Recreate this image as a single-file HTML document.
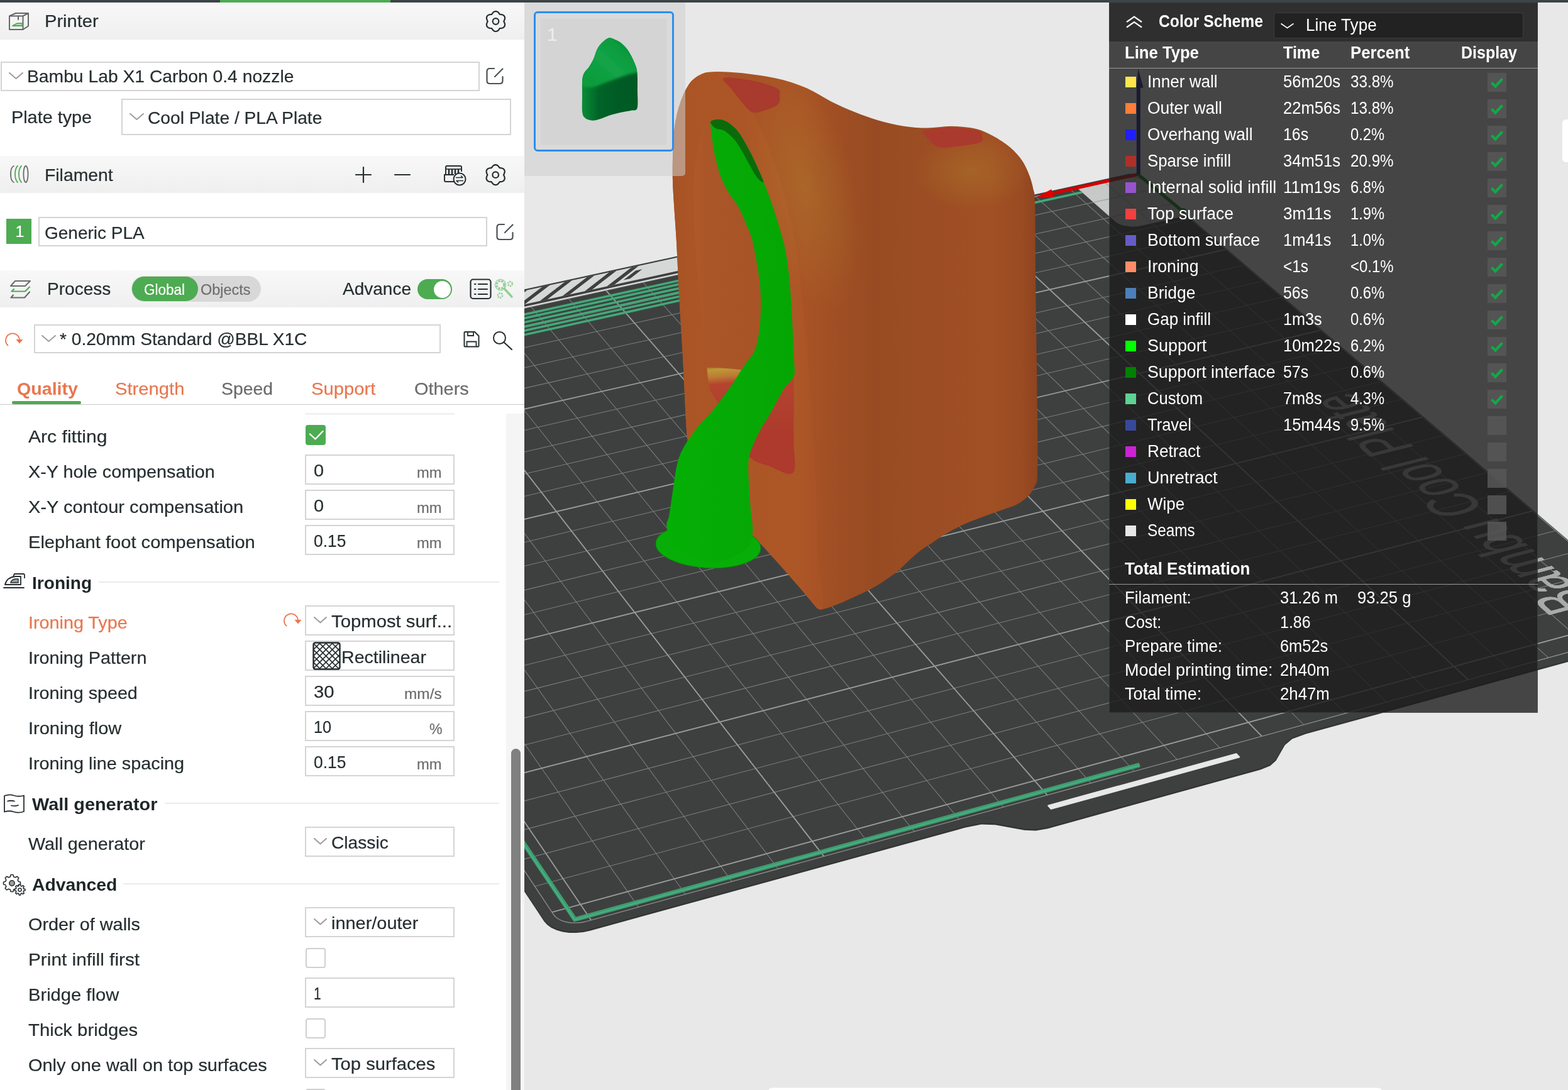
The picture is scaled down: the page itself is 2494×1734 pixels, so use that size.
<!DOCTYPE html>
<html><head><meta charset="utf-8"><title>Bambu Studio</title>
<style>
html,body{margin:0;padding:0}
body{width:2494px;height:1734px;overflow:hidden;background:#e8e8e8;font-family:"Liberation Sans",sans-serif;position:relative}
#topbar{position:absolute;left:0;top:0;width:2494px;height:4px;background:#3b4446}
#topbar div{position:absolute;left:350px;top:0;width:271px;height:4px;background:#4dab52}

#left{position:absolute;left:0;top:0;width:834px;height:1734px;background:#fff;overflow:hidden}
#left .t{position:absolute;line-height:1;white-space:nowrap;-webkit-text-stroke:0.2px currentColor;will-change:opacity}
#left .bx{position:absolute;box-sizing:border-box;border:2px solid #d4d4d4;background:#fff}
#left .ic{position:absolute;overflow:visible}
#left .hd{position:absolute;left:0;width:834px;background:linear-gradient(#f8f8f8,#efefef)}
#left .cb{position:absolute;width:32px;height:32px;box-sizing:border-box;border:2px solid #cfcfcf;border-radius:4px;background:#fff}
#left .cb.on{background:#4dab52;border:none}
#left .ln{position:absolute;height:1.6px;background:#ebebeb}


#legend{position:absolute;background:rgba(27,27,27,0.8);overflow:hidden;box-shadow:inset 0 0 0 1px rgba(120,120,130,0.25)}
#legend .t{position:absolute;line-height:1;white-space:nowrap}

</style></head><body>
<svg id="view" width="1660" height="1730" viewBox="834 4 1660 1730" style="position:absolute;left:834px;top:4px">

<defs>
<linearGradient id="gside" gradientUnits="userSpaceOnUse" x1="1280" y1="0" x2="1650" y2="0">
 <stop offset="0" stop-color="#a85326"/><stop offset="0.12" stop-color="#a04f24"/><stop offset="0.3" stop-color="#984b22"/><stop offset="0.55" stop-color="#9c4d23"/><stop offset="0.8" stop-color="#a15024"/><stop offset="0.93" stop-color="#9a4b22"/><stop offset="1" stop-color="#8e441f"/>
</linearGradient>
<linearGradient id="gfront" gradientUnits="userSpaceOnUse" x1="1070" y1="0" x2="1300" y2="0">
 <stop offset="0" stop-color="#a65225"/><stop offset="0.1" stop-color="#ab5526"/><stop offset="0.85" stop-color="#ad5727"/><stop offset="1" stop-color="#a85326"/>
</linearGradient>
<linearGradient id="ginner" gradientUnits="userSpaceOnUse" x1="1100" y1="0" x2="1262" y2="0">
 <stop offset="0" stop-color="#b05829"/><stop offset="0.15" stop-color="#ab5628"/><stop offset="0.6" stop-color="#a95427"/><stop offset="1" stop-color="#a45226"/>
</linearGradient>
<linearGradient id="gfloor" gradientUnits="userSpaceOnUse" x1="1124" y1="582" x2="1134" y2="700">
 <stop offset="0" stop-color="#b89a34" stop-opacity="0"/><stop offset="0.06" stop-color="#bb9a36"/><stop offset="0.16" stop-color="#bd7a34"/><stop offset="0.26" stop-color="#b4442f"/><stop offset="1" stop-color="#ad3a2c"/>
</linearGradient>
<linearGradient id="ggreen" gradientUnits="userSpaceOnUse" x1="1060" y1="0" x2="1262" y2="0">
 <stop offset="0" stop-color="#04b004"/><stop offset="0.45" stop-color="#06aa06"/><stop offset="1" stop-color="#04a604"/>
</linearGradient>
<radialGradient id="gy1"><stop offset="0" stop-color="#b08a2c" stop-opacity="0.34"/><stop offset="0.55" stop-color="#b0802c" stop-opacity="0.2"/><stop offset="1" stop-color="#b8802a" stop-opacity="0"/></radialGradient>
<radialGradient id="gy2"><stop offset="0" stop-color="#b08a2c" stop-opacity="0.34"/><stop offset="0.55" stop-color="#b0802c" stop-opacity="0.2"/><stop offset="1" stop-color="#b8802a" stop-opacity="0"/></radialGradient>

</defs>

<rect x="834" y="4" width="1660" height="1730" fill="#e8e8e8"/>
<path d="M297.2 604.1 L865.6 1463.4 L870.4 1468.8 L877.0 1473.5 L885.3 1477.3 L894.9 1479.9 L905.4 1481.4 L916.5 1481.6 L927.6 1480.5 L938.3 1478.2 L1534.6 1314.3 L1560.7 1309.1 L1583.0 1309.7 L1629.5 1318.2 L1647.7 1319.0 L1666.6 1315.7 L2005.0 1221.9 L2020.4 1215.7 L2029.6 1207.5 L2043.8 1182.8 L2055.4 1173.0 L2077.3 1165.1 L2620.3 1015.8 L2628.3 1013.0 L2634.9 1009.4 L2639.8 1005.1 L2643.0 1000.3 L2644.1 995.3 L2643.3 990.1 L2640.6 984.9 L2636.0 980.1 L1816.1 280.8 L1814.2 279.5 L1811.8 278.4 L1808.9 277.6 L1805.6 276.9 L1802.2 276.6 L1798.6 276.6 L1795.1 276.8 L1791.8 277.4 Z" fill="#333534" transform="translate(0,2.5)"/>
<path d="M1276.7 364.2 L281.5 580.2 L297.6 604.6 L1298.2 385.9 Z" fill="#3e403f"/>
<path d="M297.2 604.1 L865.6 1463.4 L870.4 1468.8 L877.0 1473.5 L885.3 1477.3 L894.9 1479.9 L905.4 1481.4 L916.5 1481.6 L927.6 1480.5 L938.3 1478.2 L1534.6 1314.3 L1560.7 1309.1 L1583.0 1309.7 L1629.5 1318.2 L1647.7 1319.0 L1666.6 1315.7 L2005.0 1221.9 L2020.4 1215.7 L2029.6 1207.5 L2043.8 1182.8 L2055.4 1173.0 L2077.3 1165.1 L2620.3 1015.8 L2628.3 1013.0 L2634.9 1009.4 L2639.8 1005.1 L2643.0 1000.3 L2644.1 995.3 L2643.3 990.1 L2640.6 984.9 L2636.0 980.1 L1816.1 280.8 L1814.2 279.5 L1811.8 278.4 L1808.9 277.6 L1805.6 276.9 L1802.2 276.6 L1798.6 276.6 L1795.1 276.8 L1791.8 277.4 Z" fill="#3e403f"/>
<path d="M1278.4 365.9 L282.7 582.1 L295.8 601.9 L1295.7 383.4 Z" fill="#d6d8d7"/>
<g fill="#3e403f"><path d="M977.1 453.0 L1015.9 422.9 L1004.2 425.4 L965.3 455.6 Z"/><path d="M941.7 460.8 L980.8 430.5 L969.0 433.0 L929.8 463.4 Z"/><path d="M906.1 468.6 L945.5 438.2 L933.8 440.7 L894.2 471.2 Z"/><path d="M870.3 476.4 L910.2 445.8 L898.3 448.4 L858.4 479.0 Z"/><path d="M834.4 484.2 L874.7 453.5 L862.8 456.1 L822.4 486.8 Z"/><path d="M798.4 492.1 L839.0 461.3 L827.1 463.9 L786.4 494.7 Z"/><path d="M762.2 500.0 L803.2 469.1 L791.3 471.7 L750.2 502.6 Z"/><path d="M725.9 507.9 L767.3 476.9 L755.3 479.5 L713.8 510.5 Z"/><path d="M689.5 515.9 L731.2 484.7 L719.2 487.3 L677.3 518.5 Z"/><path d="M652.9 523.9 L695.0 492.6 L682.9 495.2 L640.6 526.5 Z"/><path d="M616.1 531.9 L658.6 500.5 L646.5 503.1 L603.8 534.6 Z"/><path d="M579.2 539.9 L622.1 508.4 L609.9 511.1 L566.9 542.6 Z"/><path d="M542.2 548.0 L585.5 516.4 L573.2 519.0 L529.8 550.7 Z"/><path d="M505.0 556.2 L548.7 524.4 L536.4 527.0 L492.5 558.9 Z"/><path d="M467.6 564.3 L511.7 532.4 L499.4 535.1 L455.1 567.0 Z"/><path d="M430.1 572.5 L474.6 540.4 L462.2 543.1 L417.6 575.2 Z"/><path d="M392.5 580.7 L437.4 548.5 L424.9 551.2 L379.9 583.5 Z"/><path d="M354.7 589.0 L400.0 556.7 L387.5 559.4 L342.0 591.7 Z"/><path d="M316.7 597.3 L362.4 564.8 L349.9 567.5 L304.0 600.1 Z"/><path d="M278.6 605.6 L324.7 573.0 L312.1 575.7 L265.9 608.4 Z"/><path d="M240.3 614.0 L286.9 581.2 L274.2 584.0 L227.5 616.8 Z"/><path d="M1002.2 443.3 L1021.5 428.2 L1011.0 430.5 L991.6 445.6 Z"/></g>
<path d="M1809.6 277.0 L1712.3 298.3 L1774.5 353.0 L1777.7 355.2 L1781.9 357.2 L1786.8 358.7 L1792.3 359.8 L1798.2 360.3 L1804.2 360.4 L1810.2 359.9 L1815.8 359.0 L1887.0 343.0 Z" fill="#c7c9c8"/>
<path d="M1755.7 288.8 L2588.7 1011.9 M1836.9 300.3 L332.5 632.0 M1701.5 300.7 L2526.0 1029.0 M1864.6 323.9 L351.3 660.2 M1646.9 312.6 L2462.9 1046.3 M1892.6 347.9 L370.4 688.8 M1592.0 324.6 L2399.3 1063.8 M1921.1 372.1 L389.8 717.9 M1481.0 348.9 L2270.6 1099.0 M1979.2 421.7 L429.4 777.4 M1425.1 361.1 L2205.5 1116.9 M2008.9 447.1 L449.7 807.9 M1368.7 373.5 L2139.9 1134.9 M2039.0 472.8 L470.3 838.8 M1312.0 385.9 L2073.8 1153.0 M2069.6 498.9 L491.2 870.2 M1197.5 410.9 L1940.0 1189.7 M2132.1 552.2 L534.1 934.6 M1139.6 423.6 L1872.3 1208.3 M2164.0 579.4 L556.0 967.6 M1081.4 436.3 L1804.0 1227.0 M2196.4 607.1 L578.4 1001.1 M1022.8 449.1 L1735.2 1245.8 M2229.3 635.2 L601.1 1035.2 M904.5 475.0 L1595.9 1284.0 M2296.6 692.6 L647.6 1105.1 M844.8 488.1 L1525.4 1303.3 M2331.1 722.0 L671.5 1140.9 M784.6 501.2 L1454.4 1322.8 M2366.1 751.8 L695.7 1177.4 M724.0 514.5 L1382.7 1342.5 M2401.6 782.1 L720.4 1214.5 M601.7 541.2 L1237.7 1382.2 M2474.3 844.2 L771.1 1290.6 M539.9 554.8 L1164.2 1402.4 M2511.6 876.0 L797.1 1329.6 M477.7 568.4 L1090.2 1422.7 M2549.5 908.3 L823.6 1369.4 M415.1 582.1 L1015.5 1443.1 M2587.9 941.2 L850.6 1409.9" stroke="#7b7f7d" stroke-width="1.05" fill="none"/>
<path d="M1536.7 336.7 L2335.2 1081.3 M1950.0 396.8 L409.4 747.4 M1254.9 398.3 L2007.1 1171.3 M2100.6 525.3 L512.5 902.2 M963.9 462.0 L1665.8 1264.8 M2262.7 663.7 L624.1 1069.9 M663.1 527.8 L1310.5 1362.3 M2437.7 812.9 L745.5 1252.2 M352.1 595.9 L940.2 1463.8 M2627.0 974.5 L878.0 1451.1" stroke="#979b99" stroke-width="1.9" fill="none"/>
<path d="M1755.7 288.8 L1832.3 355.3 M1836.9 300.3 L1739.1 321.9 M1864.6 323.9 L1766.3 345.8" stroke="#aeb1af" stroke-width="1.3" fill="none"/>
<path d="M345.7 597.2 L339.7 598.9 L334.3 600.9 L329.7 603.4 L326.0 606.2 L323.5 609.1 L322.1 612.2 L322.1 615.2 L323.3 618.0 L880.8 1455.3 L884.2 1459.2 L889.0 1462.5 L894.9 1465.2 L901.7 1467.0 L909.2 1468.1 L917.1 1468.2 L925.0 1467.5 L932.6 1465.8 L2619.8 1003.3 L2625.5 1001.3 L2630.2 998.8 L2633.7 995.7 L2635.9 992.3 L2636.8 988.7 L2636.2 985.0 L2634.3 981.4 L2631.0 977.9 L1823.2 288.6 L1820.0 286.5 L1815.9 284.6 L1811.1 283.1 L1805.7 282.1 L1799.9 281.6 L1794.0 281.5 L1788.2 282.0 L1782.7 282.9 Z" stroke="#8b8f8d" stroke-width="1.3" fill="none"/>
<path d="M1299.5 387.2 L300.5 605.7" stroke="#e2e4e3" stroke-width="1.8" fill="none"/>
<path d="M1667.5 1281.6 L1671.9 1286.6 L1970.9 1204.3 L1966.3 1199.4 Z" fill="#e8e8e8" stroke="#e8e8e8" stroke-width="2.5" stroke-linejoin="round"/>
<path d="M1720.9 305.8 L281.7 621.4 M1494.1 361.2 L285.2 626.8 M1499.5 366.4 L289.0 632.7 M1504.9 371.6 L292.9 638.6 M1510.4 376.7 L296.8 644.6 M1515.8 381.9 L300.7 650.6" stroke="#3e9d71" stroke-width="3.8" fill="none"/>
<path d="M1720.9 305.8 L281.7 621.4 M1494.1 361.2 L285.2 626.8 M1499.5 366.4 L289.0 632.7 M1504.9 371.6 L292.9 638.6 M1510.4 376.7 L296.8 644.6 M1515.8 381.9 L300.7 650.6" stroke="#4fba89" stroke-width="1.2" fill="none" opacity="0.7"/>
<path d="M646.6 1064.3 L914.4 1462.7 L1812.7 1216.8" stroke="#3e9d71" stroke-width="7.2" fill="none" stroke-linejoin="miter"/>
<path d="M645.9 1064.5 L913.9 1463.3 L1813.0 1217.2" stroke="#4fba89" stroke-width="1.6" fill="none" opacity="0.8"/>
<path d="M1809.6 277.5 L1674 307.5" stroke="#d60000" stroke-width="5" fill="none"/>
<path d="M1646.5 314.8 L1672.4 301 L1675.5 313.8 Z" fill="#e00000"/>
<path d="M1809.6 277 L1881 336" stroke="#0a7a0a" stroke-width="5" stroke-linecap="round" fill="none"/>
<circle cx="1882" cy="336" r="5" fill="#0a7a0a"/>
<path d="M1810.8 277 L1810.8 138" stroke="#15158c" stroke-width="6" fill="none"/>
<path d="M1810.3 109 L1818.5 139.5 L1807.6 140 Z" fill="#15158c"/>
<clipPath id="cbody"><path d="M1096.0 750.0 C1086.6 732.5 1094.3 711.7 1093.6 700.0 C1092.9 688.3 1093.0 702.0 1091.7 680.0 C1090.4 658.0 1087.9 602.3 1086.0 568.0 C1084.1 533.7 1082.1 505.3 1080.4 474.0 C1078.7 442.7 1077.4 409.0 1075.7 380.0 C1074.0 351.0 1071.5 321.7 1070.5 300.0 C1069.5 278.3 1069.6 266.2 1070.0 250.0 C1070.4 233.8 1071.0 216.9 1072.9 202.8 C1074.8 188.7 1077.5 176.8 1081.4 165.2 C1085.3 153.6 1090.8 141.0 1096.4 133.2 C1102.0 125.4 1108.9 121.3 1115.2 118.2 C1121.5 115.1 1124.6 114.9 1134.0 114.4 C1143.4 113.9 1159.1 114.5 1171.6 115.4 C1184.1 116.3 1196.7 118.0 1209.2 120.0 C1221.7 122.0 1234.3 124.1 1246.8 127.6 C1259.3 131.1 1271.9 135.2 1284.4 140.8 C1296.9 146.4 1309.5 155.2 1322.0 161.4 C1334.5 167.7 1347.1 173.3 1359.6 178.3 C1372.1 183.3 1384.0 187.8 1397.0 191.5 C1410.0 195.2 1424.6 198.8 1437.6 200.8 C1450.6 202.8 1462.7 203.6 1475.2 203.6 C1487.7 203.6 1500.3 200.7 1512.8 200.8 C1525.3 201.0 1539.4 202.0 1550.4 204.5 C1561.4 207.0 1569.2 210.8 1578.6 215.8 C1588.0 220.8 1599.0 228.0 1606.8 234.6 C1614.6 241.2 1620.6 248.1 1625.6 255.3 C1630.6 262.5 1633.8 270.3 1636.8 277.8 C1639.8 285.3 1641.8 292.5 1643.4 300.4 C1645.0 308.3 1645.6 300.1 1646.2 325.0 C1646.8 349.9 1646.6 394.2 1647.2 450.0 C1647.8 505.8 1649.5 609.3 1650.0 660.0 C1650.5 710.7 1650.6 735.2 1650.0 754.0 C1649.4 772.8 1648.7 766.8 1646.2 772.8 C1643.7 778.8 1640.0 784.7 1635.0 789.7 C1630.0 794.7 1624.0 799.0 1616.2 802.9 C1608.4 806.8 1597.4 809.8 1588.0 813.2 C1578.6 816.6 1569.2 819.9 1559.8 823.5 C1550.4 827.1 1541.0 830.4 1531.6 834.8 C1522.2 839.2 1512.0 844.7 1503.4 849.8 C1494.8 854.9 1486.5 861.0 1480.0 865.3 C1473.5 869.6 1469.8 871.6 1464.2 875.8 C1458.7 880.0 1452.6 885.4 1446.7 890.7 C1440.8 896.0 1434.9 902.4 1429.1 907.4 C1423.2 912.4 1417.4 916.4 1411.6 920.5 C1405.8 924.6 1399.8 928.4 1394.0 931.9 C1388.2 935.4 1382.3 938.7 1376.5 941.6 C1370.7 944.5 1364.8 946.9 1358.9 949.5 C1353.1 952.1 1347.2 954.9 1341.4 957.4 C1335.6 959.9 1328.3 962.7 1323.9 964.4 C1319.5 966.1 1318.0 966.6 1315.1 967.5 C1312.2 968.4 1308.5 969.4 1306.3 969.6 C1304.1 969.8 1303.4 969.5 1301.9 968.8 C1300.4 968.1 1299.7 967.6 1297.5 965.3 C1295.3 962.9 1291.7 958.2 1288.8 954.7 C1285.9 951.2 1283.9 948.7 1280.0 944.2 C1276.1 939.7 1271.1 933.9 1265.6 927.5 C1260.1 921.1 1253.1 913.1 1246.8 906.0 C1240.5 898.9 1234.3 891.9 1228.0 885.0 C1221.7 878.1 1222.0 877.8 1209.0 864.5 C1196.0 851.2 1168.8 824.1 1150.0 805.0 C1131.2 785.9 1105.4 767.5 1096.0 750.0 Z"/></clipPath>
<path d="M1096.0 750.0 C1086.6 732.5 1094.3 711.7 1093.6 700.0 C1092.9 688.3 1093.0 702.0 1091.7 680.0 C1090.4 658.0 1087.9 602.3 1086.0 568.0 C1084.1 533.7 1082.1 505.3 1080.4 474.0 C1078.7 442.7 1077.4 409.0 1075.7 380.0 C1074.0 351.0 1071.5 321.7 1070.5 300.0 C1069.5 278.3 1069.6 266.2 1070.0 250.0 C1070.4 233.8 1071.0 216.9 1072.9 202.8 C1074.8 188.7 1077.5 176.8 1081.4 165.2 C1085.3 153.6 1090.8 141.0 1096.4 133.2 C1102.0 125.4 1108.9 121.3 1115.2 118.2 C1121.5 115.1 1124.6 114.9 1134.0 114.4 C1143.4 113.9 1159.1 114.5 1171.6 115.4 C1184.1 116.3 1196.7 118.0 1209.2 120.0 C1221.7 122.0 1234.3 124.1 1246.8 127.6 C1259.3 131.1 1271.9 135.2 1284.4 140.8 C1296.9 146.4 1309.5 155.2 1322.0 161.4 C1334.5 167.7 1347.1 173.3 1359.6 178.3 C1372.1 183.3 1384.0 187.8 1397.0 191.5 C1410.0 195.2 1424.6 198.8 1437.6 200.8 C1450.6 202.8 1462.7 203.6 1475.2 203.6 C1487.7 203.6 1500.3 200.7 1512.8 200.8 C1525.3 201.0 1539.4 202.0 1550.4 204.5 C1561.4 207.0 1569.2 210.8 1578.6 215.8 C1588.0 220.8 1599.0 228.0 1606.8 234.6 C1614.6 241.2 1620.6 248.1 1625.6 255.3 C1630.6 262.5 1633.8 270.3 1636.8 277.8 C1639.8 285.3 1641.8 292.5 1643.4 300.4 C1645.0 308.3 1645.6 300.1 1646.2 325.0 C1646.8 349.9 1646.6 394.2 1647.2 450.0 C1647.8 505.8 1649.5 609.3 1650.0 660.0 C1650.5 710.7 1650.6 735.2 1650.0 754.0 C1649.4 772.8 1648.7 766.8 1646.2 772.8 C1643.7 778.8 1640.0 784.7 1635.0 789.7 C1630.0 794.7 1624.0 799.0 1616.2 802.9 C1608.4 806.8 1597.4 809.8 1588.0 813.2 C1578.6 816.6 1569.2 819.9 1559.8 823.5 C1550.4 827.1 1541.0 830.4 1531.6 834.8 C1522.2 839.2 1512.0 844.7 1503.4 849.8 C1494.8 854.9 1486.5 861.0 1480.0 865.3 C1473.5 869.6 1469.8 871.6 1464.2 875.8 C1458.7 880.0 1452.6 885.4 1446.7 890.7 C1440.8 896.0 1434.9 902.4 1429.1 907.4 C1423.2 912.4 1417.4 916.4 1411.6 920.5 C1405.8 924.6 1399.8 928.4 1394.0 931.9 C1388.2 935.4 1382.3 938.7 1376.5 941.6 C1370.7 944.5 1364.8 946.9 1358.9 949.5 C1353.1 952.1 1347.2 954.9 1341.4 957.4 C1335.6 959.9 1328.3 962.7 1323.9 964.4 C1319.5 966.1 1318.0 966.6 1315.1 967.5 C1312.2 968.4 1308.5 969.4 1306.3 969.6 C1304.1 969.8 1303.4 969.5 1301.9 968.8 C1300.4 968.1 1299.7 967.6 1297.5 965.3 C1295.3 962.9 1291.7 958.2 1288.8 954.7 C1285.9 951.2 1283.9 948.7 1280.0 944.2 C1276.1 939.7 1271.1 933.9 1265.6 927.5 C1260.1 921.1 1253.1 913.1 1246.8 906.0 C1240.5 898.9 1234.3 891.9 1228.0 885.0 C1221.7 878.1 1222.0 877.8 1209.0 864.5 C1196.0 851.2 1168.8 824.1 1150.0 805.0 C1131.2 785.9 1105.4 767.5 1096.0 750.0 Z" fill="url(#gside)"/>
<path d="M1050.0 760.0 C1025.0 613.3 1036.0 210.0 1050.0 100.0 C1064.0 -10.0 1117.3 97.2 1134.0 100.0 C1150.7 102.8 1144.0 111.2 1150.0 117.0 C1156.0 122.8 1163.3 126.3 1170.0 135.0 C1176.7 143.7 1183.9 157.7 1190.4 169.0 C1196.9 180.3 1202.9 189.3 1209.2 202.8 C1215.5 216.3 1221.7 232.6 1228.0 249.8 C1234.3 267.0 1241.1 286.2 1246.8 306.2 C1252.5 326.2 1257.8 347.7 1262.0 370.0 C1266.2 392.3 1269.0 415.0 1272.0 440.0 C1275.0 465.0 1277.5 493.3 1280.0 520.0 C1282.5 546.7 1285.0 573.3 1287.0 600.0 C1289.0 626.7 1290.2 651.2 1292.0 680.0 C1293.8 708.8 1296.1 738.5 1297.5 772.8 C1298.9 807.1 1299.8 851.1 1300.5 885.6 C1301.2 920.1 1318.5 964.3 1301.8 980.0 C1285.0 995.7 1242.0 1016.7 1200.0 980.0 C1158.0 943.3 1075.0 906.7 1050.0 760.0 Z" fill="url(#gfront)" clip-path="url(#cbody)"/>
<g clip-path="url(#cbody)"><ellipse cx="1280" cy="300" rx="80" ry="200" fill="url(#gy1)" transform="rotate(-14 1280 300)"/><ellipse cx="1545" cy="272" rx="95" ry="62" fill="url(#gy2)"/></g>
<path d="M1150.9 123.8 C1156.4 121.8 1180.9 125.3 1195.0 128.0 C1209.1 130.7 1228.0 136.0 1235.5 140.0 C1243.0 144.0 1239.7 147.7 1240.0 152.0 C1240.3 156.3 1241.1 162.2 1237.4 166.0 C1233.7 169.8 1224.9 172.9 1218.0 175.0 C1211.1 177.1 1202.7 180.8 1196.0 178.3 C1189.3 175.8 1183.7 166.4 1178.0 160.0 C1172.3 153.6 1166.5 146.0 1162.0 140.0 C1157.5 134.0 1145.4 125.8 1150.9 123.8 Z" fill="#a83a2e"/>
<path d="M1469.5 208.5 C1474.8 205.3 1495.9 203.2 1510.0 203.0 C1524.1 202.8 1545.3 204.8 1554.0 207.0 C1562.7 209.2 1561.0 212.8 1562.0 216.0 C1563.0 219.2 1565.1 223.3 1559.8 226.0 C1554.5 228.7 1541.0 230.6 1530.0 232.0 C1519.0 233.4 1502.7 236.3 1494.0 234.6 C1485.3 232.9 1482.1 226.3 1478.0 222.0 C1473.9 217.7 1464.2 211.7 1469.5 208.5 Z" fill="#ab3a2e"/>
<clipPath id="copen"><path d="M1130.2 193.4 C1123.9 196.4 1118.7 202.5 1115.2 210.3 C1111.8 218.1 1111.3 229.1 1109.5 240.4 C1107.7 251.7 1105.4 263.1 1104.5 278.0 C1103.6 292.9 1103.8 313.0 1104.0 330.0 C1104.2 347.0 1104.8 361.7 1105.8 380.0 C1106.8 398.3 1108.5 421.2 1110.0 440.0 C1111.5 458.8 1112.9 471.5 1115.0 492.8 C1117.1 514.1 1120.5 547.6 1122.7 568.0 C1124.9 588.4 1126.1 605.0 1128.0 615.0 C1129.9 625.0 1128.7 618.8 1134.0 628.0 C1139.3 637.2 1150.7 653.8 1160.0 670.0 C1169.3 686.2 1179.2 713.0 1190.0 725.0 C1200.8 737.0 1213.1 737.5 1225.0 742.0 C1236.9 746.5 1255.2 759.0 1261.5 752.0 C1267.8 745.0 1262.3 725.7 1262.5 700.0 C1262.7 674.3 1262.7 620.0 1262.7 598.0 C1262.7 576.0 1263.5 588.7 1262.7 568.0 C1261.9 547.3 1259.7 499.1 1258.0 474.0 C1256.3 448.9 1254.6 433.3 1252.4 417.6 C1250.2 401.9 1249.0 395.4 1244.9 380.0 C1240.8 364.6 1234.0 342.3 1228.0 325.0 C1222.0 307.7 1215.5 290.7 1209.2 276.0 C1202.9 261.3 1196.7 248.2 1190.4 236.6 C1184.1 225.0 1177.9 213.9 1171.6 206.5 C1165.3 199.1 1159.7 194.6 1152.8 192.4 C1145.9 190.2 1136.5 190.4 1130.2 193.4 Z"/></clipPath>
<path d="M1130.2 193.4 C1123.9 196.4 1118.7 202.5 1115.2 210.3 C1111.8 218.1 1111.3 229.1 1109.5 240.4 C1107.7 251.7 1105.4 263.1 1104.5 278.0 C1103.6 292.9 1103.8 313.0 1104.0 330.0 C1104.2 347.0 1104.8 361.7 1105.8 380.0 C1106.8 398.3 1108.5 421.2 1110.0 440.0 C1111.5 458.8 1112.9 471.5 1115.0 492.8 C1117.1 514.1 1120.5 547.6 1122.7 568.0 C1124.9 588.4 1126.1 605.0 1128.0 615.0 C1129.9 625.0 1128.7 618.8 1134.0 628.0 C1139.3 637.2 1150.7 653.8 1160.0 670.0 C1169.3 686.2 1179.2 713.0 1190.0 725.0 C1200.8 737.0 1213.1 737.5 1225.0 742.0 C1236.9 746.5 1255.2 759.0 1261.5 752.0 C1267.8 745.0 1262.3 725.7 1262.5 700.0 C1262.7 674.3 1262.7 620.0 1262.7 598.0 C1262.7 576.0 1263.5 588.7 1262.7 568.0 C1261.9 547.3 1259.7 499.1 1258.0 474.0 C1256.3 448.9 1254.6 433.3 1252.4 417.6 C1250.2 401.9 1249.0 395.4 1244.9 380.0 C1240.8 364.6 1234.0 342.3 1228.0 325.0 C1222.0 307.7 1215.5 290.7 1209.2 276.0 C1202.9 261.3 1196.7 248.2 1190.4 236.6 C1184.1 225.0 1177.9 213.9 1171.6 206.5 C1165.3 199.1 1159.7 194.6 1152.8 192.4 C1145.9 190.2 1136.5 190.4 1130.2 193.4 Z" fill="url(#ginner)"/>
<path d="M1118.0 600.0 C1117.0 590.8 1110.3 586.7 1124.0 585.0 C1137.7 583.3 1176.3 588.2 1200.0 590.0 C1223.7 591.8 1255.0 567.7 1266.0 596.0 C1277.0 624.3 1272.8 734.3 1266.0 760.0 C1259.2 785.7 1237.7 754.2 1225.0 750.0 C1212.3 745.8 1200.8 746.7 1190.0 735.0 C1179.2 723.3 1170.0 695.8 1160.0 680.0 C1150.0 664.2 1137.0 653.3 1130.0 640.0 C1123.0 626.7 1119.0 609.2 1118.0 600.0 Z" fill="url(#gfloor)" clip-path="url(#copen)"/>
<ellipse cx="1126.5" cy="868.5" rx="83.5" ry="35" fill="#08ae08" transform="rotate(3 1126.5 868.5)"/>
<ellipse cx="1126.5" cy="868.5" rx="83.5" ry="35" fill="none" stroke="#0a8a0a" stroke-width="1" transform="rotate(3 1126.5 868.5)"/>
<path d="M1130.5 195.0 C1129.2 199.0 1131.1 207.1 1132.0 215.0 C1132.9 222.9 1133.7 231.6 1136.0 242.4 C1138.3 253.2 1142.3 269.6 1146.0 280.0 C1149.7 290.4 1153.2 296.7 1158.0 305.0 C1162.8 313.3 1170.3 321.7 1175.0 330.0 C1179.7 338.3 1182.5 346.7 1186.0 355.0 C1189.5 363.3 1193.1 369.6 1196.0 380.0 C1198.9 390.4 1201.3 405.1 1203.5 417.6 C1205.7 430.1 1207.9 442.5 1209.0 455.0 C1210.1 467.5 1210.3 480.3 1210.0 492.8 C1209.7 505.3 1208.7 519.0 1207.0 530.0 C1205.3 541.0 1203.8 549.8 1199.8 558.6 C1195.8 567.4 1189.2 573.6 1182.9 583.0 C1176.6 592.4 1170.2 603.4 1162.0 615.0 C1153.8 626.6 1142.1 642.6 1134.0 652.6 C1125.9 662.6 1119.6 667.5 1113.3 675.0 C1107.0 682.5 1101.4 690.1 1096.4 697.6 C1091.4 705.1 1086.7 712.2 1083.2 720.0 C1079.8 727.8 1077.9 734.3 1075.7 744.6 C1073.5 754.9 1071.9 769.5 1070.0 782.0 C1068.1 794.5 1066.0 810.4 1064.4 819.8 C1062.9 829.2 1058.9 830.2 1060.7 838.6 C1062.5 847.0 1063.5 860.6 1075.0 870.0 C1086.5 879.4 1111.7 894.2 1130.0 895.0 C1148.3 895.8 1173.8 882.8 1185.0 875.0 C1196.2 867.2 1195.5 858.8 1197.0 848.0 C1198.5 837.2 1195.0 822.9 1194.0 810.4 C1193.0 797.9 1191.9 785.4 1191.3 772.8 C1190.7 760.2 1189.6 745.0 1190.4 735.0 C1191.2 725.0 1192.9 721.0 1196.0 712.6 C1199.1 704.2 1204.3 693.2 1209.0 684.4 C1213.7 675.6 1217.7 671.0 1224.0 660.0 C1230.3 649.0 1240.3 629.0 1246.8 618.7 C1253.2 608.4 1260.0 606.5 1262.7 598.0 C1265.4 589.5 1263.5 588.7 1262.7 568.0 C1261.9 547.3 1259.7 499.1 1258.0 474.0 C1256.3 448.9 1254.6 433.3 1252.4 417.6 C1250.2 401.9 1249.0 395.4 1244.9 380.0 C1240.8 364.6 1234.0 342.3 1228.0 325.0 C1222.0 307.7 1215.5 290.7 1209.2 276.0 C1202.9 261.3 1196.7 248.2 1190.4 236.6 C1184.1 225.0 1177.9 213.9 1171.6 206.5 C1165.3 199.1 1158.1 195.0 1152.8 192.4 C1147.5 189.8 1143.7 190.6 1140.0 191.0 C1136.3 191.4 1131.8 191.0 1130.5 195.0 Z" fill="url(#ggreen)"/>
<path d="M1130.5 193.0 C1132.5 190.8 1143.2 188.8 1150.0 191.0 C1156.8 193.2 1164.9 198.9 1171.6 206.5 C1178.3 214.1 1184.1 225.0 1190.4 236.6 C1196.7 248.2 1205.3 267.1 1209.2 276.0 C1213.1 284.9 1214.9 289.0 1214.0 290.0 C1213.1 291.0 1207.7 286.7 1204.0 282.0 C1200.3 277.3 1196.0 269.0 1192.0 262.0 C1188.0 255.0 1184.0 246.7 1180.0 240.0 C1176.0 233.3 1172.7 227.3 1168.0 222.0 C1163.3 216.7 1157.0 211.0 1152.0 208.0 C1147.0 205.0 1141.6 206.5 1138.0 204.0 C1134.4 201.5 1128.5 195.2 1130.5 193.0 Z" fill="#0b6b0b"/>
<rect x="2485" y="190" width="20" height="68" rx="6" fill="#fff"/>
<rect x="1221" y="1730.5" width="978" height="20" rx="8" fill="#fff"/>
</svg>
<div id="ptwrap" style="position:absolute;left:0;top:0;width:2494px;height:1734px;overflow:hidden"><div id="ptxt" style="position:absolute;left:0;top:0;width:1366px;height:167px;transform-origin:0 0;transform:matrix3d(-0.146995,-0.211722,0,0.00006810,0.717985,-0.131556,0,0.00003792,0,0,1,0,2452.358,986.540,0,1.000000);font:normal 167px/167px 'Liberation Sans',sans-serif;color:#a9abaa;white-space:nowrap;-webkit-text-stroke:1.2px #a9abaa">Bambu Cool Plate</div></div>
<div style="position:absolute;left:834px;top:4px;width:256px;height:276px;border-radius:0 0 5px 0;background:rgba(205,205,205,0.55)"></div>
<div style="position:absolute;left:860px;top:29.7px;width:200px;height:200px;background:#d4d4d4"></div>
<div style="position:absolute;left:848.6px;top:18.2px;width:223px;height:223.3px;box-sizing:border-box;border:3.8px solid #2a8ef0;border-radius:6px"></div>
<div style="position:absolute;left:870px;top:40px;font-size:30px;line-height:1;color:#ededed">1</div>
<svg style="position:absolute;left:860px;top:30px" width="200" height="200" viewBox="860 30 200 200">
<defs><linearGradient id="tg" gradientUnits="userSpaceOnUse" x1="926" y1="0" x2="1014" y2="0"><stop offset="0" stop-color="#0a8c36"/><stop offset="0.3" stop-color="#006428"/><stop offset="0.7" stop-color="#005b24"/><stop offset="1" stop-color="#005a24"/></linearGradient>
<linearGradient id="tg2" gradientUnits="userSpaceOnUse" x1="940" y1="125" x2="990" y2="70"><stop offset="0" stop-color="#0a9c3c"/><stop offset="0.5" stop-color="#14a448"/><stop offset="1" stop-color="#04993a"/></linearGradient></defs>
<clipPath id="tcl"><path d="M966.6 61.1 C962.2 63.1 955.4 69.7 951.6 75.2 C947.8 80.7 946.5 88.7 944.0 94.0 C941.5 99.3 939.0 103.3 936.5 107.1 C934.0 110.8 930.7 113.0 929.0 116.5 C927.3 120.0 926.7 121.9 926.2 127.8 C925.7 133.7 926.0 143.5 926.0 152.0 C926.0 160.5 925.4 172.6 926.2 178.6 C927.0 184.6 928.2 185.8 930.9 188.0 C933.6 190.2 938.1 191.5 942.2 191.7 C946.3 191.8 950.6 190.3 955.3 188.9 C960.0 187.5 964.8 185.0 970.4 183.3 C976.0 181.6 983.6 179.8 989.2 178.6 C994.8 177.3 1000.1 176.9 1004.2 175.8 C1008.3 174.7 1012.0 177.1 1013.6 172.0 C1015.2 166.9 1014.0 154.2 1014.0 145.0 C1014.0 135.8 1014.3 123.8 1013.6 116.5 C1012.9 109.2 1012.0 107.1 1009.8 101.5 C1007.6 95.9 1003.9 88.0 1000.5 82.7 C997.1 77.4 993.0 72.8 989.2 69.5 C985.4 66.2 981.7 64.4 977.9 63.0 C974.1 61.6 971.0 59.1 966.6 61.1 Z"/></clipPath><filter id="tbl" x="-20%" y="-20%" width="140%" height="140%"><feGaussianBlur stdDeviation="2.2"/></filter>
<path d="M966.6 61.1 C962.2 63.1 955.4 69.7 951.6 75.2 C947.8 80.7 946.5 88.7 944.0 94.0 C941.5 99.3 939.0 103.3 936.5 107.1 C934.0 110.8 930.7 113.0 929.0 116.5 C927.3 120.0 926.7 121.9 926.2 127.8 C925.7 133.7 926.0 143.5 926.0 152.0 C926.0 160.5 925.4 172.6 926.2 178.6 C927.0 184.6 928.2 185.8 930.9 188.0 C933.6 190.2 938.1 191.5 942.2 191.7 C946.3 191.8 950.6 190.3 955.3 188.9 C960.0 187.5 964.8 185.0 970.4 183.3 C976.0 181.6 983.6 179.8 989.2 178.6 C994.8 177.3 1000.1 176.9 1004.2 175.8 C1008.3 174.7 1012.0 177.1 1013.6 172.0 C1015.2 166.9 1014.0 154.2 1014.0 145.0 C1014.0 135.8 1014.3 123.8 1013.6 116.5 C1012.9 109.2 1012.0 107.1 1009.8 101.5 C1007.6 95.9 1003.9 88.0 1000.5 82.7 C997.1 77.4 993.0 72.8 989.2 69.5 C985.4 66.2 981.7 64.4 977.9 63.0 C974.1 61.6 971.0 59.1 966.6 61.1 Z" fill="url(#tg)"/>
<g clip-path="url(#tcl)"><path d="M966.6 50.0 C958.4 52.5 946.1 62.7 940.0 70.0 C933.9 77.3 933.3 87.8 930.0 94.0 C926.7 100.2 922.5 103.3 920.0 107.1 C917.5 110.8 915.8 113.0 915.0 116.5 C914.2 120.0 913.8 124.5 915.0 127.8 C916.2 131.1 918.5 134.1 922.0 136.0 C925.5 137.9 931.7 138.8 936.0 139.0 C940.3 139.2 943.7 138.7 948.0 137.5 C952.3 136.3 956.7 134.0 962.0 132.0 C967.3 130.0 974.0 127.7 980.0 125.5 C986.0 123.3 990.5 121.4 998.0 119.0 C1005.5 116.6 1020.5 115.8 1025.0 111.0 C1029.5 106.2 1027.5 96.8 1025.0 90.0 C1022.5 83.2 1016.0 75.8 1010.0 70.0 C1004.0 64.2 996.4 58.3 989.2 55.0 C982.0 51.7 974.8 47.5 966.6 50.0 Z" fill="url(#tg2)" filter="url(#tbl)"/></g>
</svg>
<div id="legend" style="left:1764px;top:4px;width:681.5px;height:1130px">
<div style="position:absolute;left:0;top:0;width:681.5px;height:62px;background:rgba(20,20,20,0.45)"></div>
<svg style="position:absolute;left:26px;top:20px" width="30" height="24" viewBox="0 0 30 24"><path d="M2 11 L14 2.5 L26 11 M2 19.5 L14 11 L26 19.5" fill="none" stroke="#fff" stroke-width="2.2" stroke-linejoin="miter"/></svg>
<div class="t" style="left:78.8px;top:17.4px;font-size:26.8px;color:#ffffff;font-weight:bold;transform-origin:0 0;transform:scaleX(0.9204);">Color Scheme</div>
<div style="position:absolute;left:262.4000000000001px;top:16.4px;width:396.4px;height:41px;box-sizing:border-box;border:1px solid #3c3c3c;border-radius:4px;background:#222"></div>
<svg style="position:absolute;left:272px;top:32px" width="24" height="12" viewBox="0 0 24 12"><path d="M1.5 1.5 L11.5 8.5 L21.5 1.5" fill="none" stroke="#fff" stroke-width="1.6"/></svg>
<div class="t" style="left:312.6px;top:23.4px;font-size:26.8px;color:#ffffff;font-weight:normal;transform-origin:0 0;transform:scaleX(0.9734);">Line Type</div>
<div class="t" style="left:24.6px;top:67.4px;font-size:26.8px;color:#ffffff;font-weight:bold;transform-origin:0 0;transform:scaleX(0.9578);">Line Type</div>
<div class="t" style="left:276.5px;top:67.4px;font-size:26.8px;color:#ffffff;font-weight:bold;transform-origin:0 0;transform:scaleX(0.9366);">Time</div>
<div class="t" style="left:384.2px;top:67.4px;font-size:26.8px;color:#ffffff;font-weight:bold;transform-origin:0 0;transform:scaleX(0.9587);">Percent</div>
<div class="t" style="left:559.6px;top:67.4px;font-size:26.8px;color:#ffffff;font-weight:bold;transform-origin:0 0;transform:scaleX(0.9336);">Display</div>
<div style="position:absolute;left:0;top:103.6px;width:681.5px;height:1.4px;background:#9a9a9a"></div>
<div style="position:absolute;left:26px;top:118.2px;width:17.1px;height:17.3px;background:#ffe64d"></div>
<div class="t" style="left:61.4px;top:113.0px;font-size:26.8px;color:#ffffff;font-weight:normal;transform-origin:0 0;transform:scaleX(0.9736);">Inner wall</div>
<div class="t" style="left:276.5px;top:113.0px;font-size:26.8px;color:#ffffff;font-weight:normal;transform-origin:0 0;transform:scaleX(0.9541);">56m20s</div>
<div class="t" style="left:384.2px;top:113.0px;font-size:26.8px;color:#ffffff;font-weight:normal;transform-origin:0 0;transform:scaleX(0.9033);">33.8%</div>
<div style="position:absolute;left:602px;top:111.9px;width:30px;height:30px;background:rgba(86,86,86,0.88)"></div>
<svg style="position:absolute;left:602px;top:111.9px" width="30" height="30" viewBox="0 0 30 30"><path d="M6.5 15.5 L12.5 21.5 L23.5 9.5" fill="none" stroke="#12a848" stroke-width="4.2"/></svg>
<div style="position:absolute;left:26px;top:160.2px;width:17.1px;height:17.3px;background:#ff7d38"></div>
<div class="t" style="left:61.4px;top:155.0px;font-size:26.8px;color:#ffffff;font-weight:normal;transform-origin:0 0;transform:scaleX(0.9854);">Outer wall</div>
<div class="t" style="left:276.5px;top:155.0px;font-size:26.8px;color:#ffffff;font-weight:normal;transform-origin:0 0;transform:scaleX(0.9541);">22m56s</div>
<div class="t" style="left:384.2px;top:155.0px;font-size:26.8px;color:#ffffff;font-weight:normal;transform-origin:0 0;transform:scaleX(0.9033);">13.8%</div>
<div style="position:absolute;left:602px;top:153.9px;width:30px;height:30px;background:rgba(86,86,86,0.88)"></div>
<svg style="position:absolute;left:602px;top:153.9px" width="30" height="30" viewBox="0 0 30 30"><path d="M6.5 15.5 L12.5 21.5 L23.5 9.5" fill="none" stroke="#12a848" stroke-width="4.2"/></svg>
<div style="position:absolute;left:26px;top:202.2px;width:17.1px;height:17.3px;background:#1f1fff"></div>
<div class="t" style="left:61.4px;top:197.0px;font-size:26.8px;color:#ffffff;font-weight:normal;transform-origin:0 0;transform:scaleX(0.9778);">Overhang wall</div>
<div class="t" style="left:276.5px;top:197.0px;font-size:26.8px;color:#ffffff;font-weight:normal;transform-origin:0 0;transform:scaleX(0.9270);">16s</div>
<div class="t" style="left:384.2px;top:197.0px;font-size:26.8px;color:#ffffff;font-weight:normal;transform-origin:0 0;transform:scaleX(0.8872);">0.2%</div>
<div style="position:absolute;left:602px;top:195.9px;width:30px;height:30px;background:rgba(86,86,86,0.88)"></div>
<svg style="position:absolute;left:602px;top:195.9px" width="30" height="30" viewBox="0 0 30 30"><path d="M6.5 15.5 L12.5 21.5 L23.5 9.5" fill="none" stroke="#12a848" stroke-width="4.2"/></svg>
<div style="position:absolute;left:26px;top:244.2px;width:17.1px;height:17.3px;background:#b03029"></div>
<div class="t" style="left:61.4px;top:239.0px;font-size:26.8px;color:#ffffff;font-weight:normal;transform-origin:0 0;transform:scaleX(0.9602);">Sparse infill</div>
<div class="t" style="left:276.5px;top:239.0px;font-size:26.8px;color:#ffffff;font-weight:normal;transform-origin:0 0;transform:scaleX(0.9541);">34m51s</div>
<div class="t" style="left:384.2px;top:239.0px;font-size:26.8px;color:#ffffff;font-weight:normal;transform-origin:0 0;transform:scaleX(0.9033);">20.9%</div>
<div style="position:absolute;left:602px;top:237.9px;width:30px;height:30px;background:rgba(86,86,86,0.88)"></div>
<svg style="position:absolute;left:602px;top:237.9px" width="30" height="30" viewBox="0 0 30 30"><path d="M6.5 15.5 L12.5 21.5 L23.5 9.5" fill="none" stroke="#12a848" stroke-width="4.2"/></svg>
<div style="position:absolute;left:26px;top:286.2px;width:17.1px;height:17.3px;background:#9654cc"></div>
<div class="t" style="left:61.4px;top:281.0px;font-size:26.8px;color:#ffffff;font-weight:normal;transform-origin:0 0;transform:scaleX(0.9986);">Internal solid infill</div>
<div class="t" style="left:276.5px;top:281.0px;font-size:26.8px;color:#ffffff;font-weight:normal;transform-origin:0 0;transform:scaleX(0.9744);">11m19s</div>
<div class="t" style="left:384.2px;top:281.0px;font-size:26.8px;color:#ffffff;font-weight:normal;transform-origin:0 0;transform:scaleX(0.8872);">6.8%</div>
<div style="position:absolute;left:602px;top:279.9px;width:30px;height:30px;background:rgba(86,86,86,0.88)"></div>
<svg style="position:absolute;left:602px;top:279.9px" width="30" height="30" viewBox="0 0 30 30"><path d="M6.5 15.5 L12.5 21.5 L23.5 9.5" fill="none" stroke="#12a848" stroke-width="4.2"/></svg>
<div style="position:absolute;left:26px;top:328.2px;width:17.1px;height:17.3px;background:#f04040"></div>
<div class="t" style="left:61.4px;top:323.0px;font-size:26.8px;color:#ffffff;font-weight:normal;transform-origin:0 0;transform:scaleX(0.9886);">Top surface</div>
<div class="t" style="left:276.5px;top:323.0px;font-size:26.8px;color:#ffffff;font-weight:normal;transform-origin:0 0;transform:scaleX(0.9753);">3m11s</div>
<div class="t" style="left:384.2px;top:323.0px;font-size:26.8px;color:#ffffff;font-weight:normal;transform-origin:0 0;transform:scaleX(0.8872);">1.9%</div>
<div style="position:absolute;left:602px;top:321.9px;width:30px;height:30px;background:rgba(86,86,86,0.88)"></div>
<svg style="position:absolute;left:602px;top:321.9px" width="30" height="30" viewBox="0 0 30 30"><path d="M6.5 15.5 L12.5 21.5 L23.5 9.5" fill="none" stroke="#12a848" stroke-width="4.2"/></svg>
<div style="position:absolute;left:26px;top:370.2px;width:17.1px;height:17.3px;background:#665cc7"></div>
<div class="t" style="left:61.4px;top:365.0px;font-size:26.8px;color:#ffffff;font-weight:normal;transform-origin:0 0;transform:scaleX(0.9931);">Bottom surface</div>
<div class="t" style="left:276.5px;top:365.0px;font-size:26.8px;color:#ffffff;font-weight:normal;transform-origin:0 0;transform:scaleX(0.9513);">1m41s</div>
<div class="t" style="left:384.2px;top:365.0px;font-size:26.8px;color:#ffffff;font-weight:normal;transform-origin:0 0;transform:scaleX(0.8872);">1.0%</div>
<div style="position:absolute;left:602px;top:363.9px;width:30px;height:30px;background:rgba(86,86,86,0.88)"></div>
<svg style="position:absolute;left:602px;top:363.9px" width="30" height="30" viewBox="0 0 30 30"><path d="M6.5 15.5 L12.5 21.5 L23.5 9.5" fill="none" stroke="#12a848" stroke-width="4.2"/></svg>
<div style="position:absolute;left:26px;top:412.2px;width:17.1px;height:17.3px;background:#ff8c69"></div>
<div class="t" style="left:61.4px;top:407.0px;font-size:26.8px;color:#ffffff;font-weight:normal;transform-origin:0 0;transform:scaleX(0.9940);">Ironing</div>
<div class="t" style="left:276.5px;top:407.0px;font-size:26.8px;color:#ffffff;font-weight:normal;transform-origin:0 0;transform:scaleX(0.9116);">&lt;1s</div>
<div class="t" style="left:384.2px;top:407.0px;font-size:26.8px;color:#ffffff;font-weight:normal;transform-origin:0 0;transform:scaleX(0.8945);">&lt;0.1%</div>
<div style="position:absolute;left:602px;top:405.9px;width:30px;height:30px;background:rgba(86,86,86,0.88)"></div>
<svg style="position:absolute;left:602px;top:405.9px" width="30" height="30" viewBox="0 0 30 30"><path d="M6.5 15.5 L12.5 21.5 L23.5 9.5" fill="none" stroke="#12a848" stroke-width="4.2"/></svg>
<div style="position:absolute;left:26px;top:454.2px;width:17.1px;height:17.3px;background:#4d80ba"></div>
<div class="t" style="left:61.4px;top:449.0px;font-size:26.8px;color:#ffffff;font-weight:normal;transform-origin:0 0;transform:scaleX(0.9877);">Bridge</div>
<div class="t" style="left:276.5px;top:449.0px;font-size:26.8px;color:#ffffff;font-weight:normal;transform-origin:0 0;transform:scaleX(0.9270);">56s</div>
<div class="t" style="left:384.2px;top:449.0px;font-size:26.8px;color:#ffffff;font-weight:normal;transform-origin:0 0;transform:scaleX(0.8872);">0.6%</div>
<div style="position:absolute;left:602px;top:447.9px;width:30px;height:30px;background:rgba(86,86,86,0.88)"></div>
<svg style="position:absolute;left:602px;top:447.9px" width="30" height="30" viewBox="0 0 30 30"><path d="M6.5 15.5 L12.5 21.5 L23.5 9.5" fill="none" stroke="#12a848" stroke-width="4.2"/></svg>
<div style="position:absolute;left:26px;top:496.2px;width:17.1px;height:17.3px;background:#ffffff"></div>
<div class="t" style="left:61.4px;top:491.0px;font-size:26.8px;color:#ffffff;font-weight:normal;transform-origin:0 0;transform:scaleX(0.9701);">Gap infill</div>
<div class="t" style="left:276.5px;top:491.0px;font-size:26.8px;color:#ffffff;font-weight:normal;transform-origin:0 0;transform:scaleX(0.9422);">1m3s</div>
<div class="t" style="left:384.2px;top:491.0px;font-size:26.8px;color:#ffffff;font-weight:normal;transform-origin:0 0;transform:scaleX(0.8872);">0.6%</div>
<div style="position:absolute;left:602px;top:489.9px;width:30px;height:30px;background:rgba(86,86,86,0.88)"></div>
<svg style="position:absolute;left:602px;top:489.9px" width="30" height="30" viewBox="0 0 30 30"><path d="M6.5 15.5 L12.5 21.5 L23.5 9.5" fill="none" stroke="#12a848" stroke-width="4.2"/></svg>
<div style="position:absolute;left:26px;top:538.2px;width:17.1px;height:17.3px;background:#00ff00"></div>
<div class="t" style="left:61.4px;top:533.0px;font-size:26.8px;color:#ffffff;font-weight:normal;transform-origin:0 0;transform:scaleX(1.0042);">Support</div>
<div class="t" style="left:276.5px;top:533.0px;font-size:26.8px;color:#ffffff;font-weight:normal;transform-origin:0 0;transform:scaleX(0.9541);">10m22s</div>
<div class="t" style="left:384.2px;top:533.0px;font-size:26.8px;color:#ffffff;font-weight:normal;transform-origin:0 0;transform:scaleX(0.8872);">6.2%</div>
<div style="position:absolute;left:602px;top:531.9px;width:30px;height:30px;background:rgba(86,86,86,0.88)"></div>
<svg style="position:absolute;left:602px;top:531.9px" width="30" height="30" viewBox="0 0 30 30"><path d="M6.5 15.5 L12.5 21.5 L23.5 9.5" fill="none" stroke="#12a848" stroke-width="4.2"/></svg>
<div style="position:absolute;left:26px;top:580.2px;width:17.1px;height:17.3px;background:#008000"></div>
<div class="t" style="left:61.4px;top:575.0px;font-size:26.8px;color:#ffffff;font-weight:normal;transform-origin:0 0;transform:scaleX(0.9977);">Support interface</div>
<div class="t" style="left:276.5px;top:575.0px;font-size:26.8px;color:#ffffff;font-weight:normal;transform-origin:0 0;transform:scaleX(0.9270);">57s</div>
<div class="t" style="left:384.2px;top:575.0px;font-size:26.8px;color:#ffffff;font-weight:normal;transform-origin:0 0;transform:scaleX(0.8872);">0.6%</div>
<div style="position:absolute;left:602px;top:573.9px;width:30px;height:30px;background:rgba(86,86,86,0.88)"></div>
<svg style="position:absolute;left:602px;top:573.9px" width="30" height="30" viewBox="0 0 30 30"><path d="M6.5 15.5 L12.5 21.5 L23.5 9.5" fill="none" stroke="#12a848" stroke-width="4.2"/></svg>
<div style="position:absolute;left:26px;top:622.2px;width:17.1px;height:17.3px;background:#5ed194"></div>
<div class="t" style="left:61.4px;top:617.0px;font-size:26.8px;color:#ffffff;font-weight:normal;transform-origin:0 0;transform:scaleX(0.9533);">Custom</div>
<div class="t" style="left:276.5px;top:617.0px;font-size:26.8px;color:#ffffff;font-weight:normal;transform-origin:0 0;transform:scaleX(0.9422);">7m8s</div>
<div class="t" style="left:384.2px;top:617.0px;font-size:26.8px;color:#ffffff;font-weight:normal;transform-origin:0 0;transform:scaleX(0.8872);">4.3%</div>
<div style="position:absolute;left:602px;top:615.9px;width:30px;height:30px;background:rgba(86,86,86,0.88)"></div>
<svg style="position:absolute;left:602px;top:615.9px" width="30" height="30" viewBox="0 0 30 30"><path d="M6.5 15.5 L12.5 21.5 L23.5 9.5" fill="none" stroke="#12a848" stroke-width="4.2"/></svg>
<div style="position:absolute;left:26px;top:664.2px;width:17.1px;height:17.3px;background:#38489b"></div>
<div class="t" style="left:61.4px;top:659.0px;font-size:26.8px;color:#ffffff;font-weight:normal;transform-origin:0 0;transform:scaleX(0.9521);">Travel</div>
<div class="t" style="left:276.5px;top:659.0px;font-size:26.8px;color:#ffffff;font-weight:normal;transform-origin:0 0;transform:scaleX(0.9541);">15m44s</div>
<div class="t" style="left:384.2px;top:659.0px;font-size:26.8px;color:#ffffff;font-weight:normal;transform-origin:0 0;transform:scaleX(0.8872);">9.5%</div>
<div style="position:absolute;left:602px;top:657.9px;width:30px;height:30px;background:rgba(86,86,86,0.88)"></div>
<div style="position:absolute;left:26px;top:706.2px;width:17.1px;height:17.3px;background:#cd22d6"></div>
<div class="t" style="left:61.4px;top:701.0px;font-size:26.8px;color:#ffffff;font-weight:normal;transform-origin:0 0;transform:scaleX(0.9771);">Retract</div>
<div style="position:absolute;left:602px;top:699.9px;width:30px;height:30px;background:rgba(86,86,86,0.88)"></div>
<div style="position:absolute;left:26px;top:748.2px;width:17.1px;height:17.3px;background:#49add1"></div>
<div class="t" style="left:61.4px;top:743.0px;font-size:26.8px;color:#ffffff;font-weight:normal;transform-origin:0 0;transform:scaleX(1.0132);">Unretract</div>
<div style="position:absolute;left:602px;top:741.9px;width:30px;height:30px;background:rgba(86,86,86,0.88)"></div>
<div style="position:absolute;left:26px;top:790.2px;width:17.1px;height:17.3px;background:#ffff00"></div>
<div class="t" style="left:61.4px;top:785.0px;font-size:26.8px;color:#ffffff;font-weight:normal;transform-origin:0 0;transform:scaleX(0.9681);">Wipe</div>
<div style="position:absolute;left:602px;top:783.9px;width:30px;height:30px;background:rgba(86,86,86,0.88)"></div>
<div style="position:absolute;left:26px;top:832.2px;width:17.1px;height:17.3px;background:#e6e6e6"></div>
<div class="t" style="left:61.4px;top:827.0px;font-size:26.8px;color:#ffffff;font-weight:normal;transform-origin:0 0;transform:scaleX(0.9056);">Seams</div>
<div style="position:absolute;left:602px;top:825.9px;width:30px;height:30px;background:rgba(86,86,86,0.88)"></div>
<div class="t" style="left:24.6px;top:887.9px;font-size:26.8px;color:#ffffff;font-weight:bold;transform-origin:0 0;transform:scaleX(0.9656);">Total Estimation</div>
<div style="position:absolute;left:0;top:924.8px;width:681.5px;height:1.4px;background:#9a9a9a"></div>
<div class="t" style="left:24.6px;top:934.4px;font-size:26.8px;color:#ffffff;font-weight:normal;transform-origin:0 0;transform:scaleX(0.9596);">Filament:</div>
<div class="t" style="left:271.6px;top:934.4px;font-size:26.8px;color:#ffffff;font-weight:normal;transform-origin:0 0;transform:scaleX(0.9497);">31.26 m</div>
<div class="t" style="left:395.4px;top:934.4px;font-size:26.8px;color:#ffffff;font-weight:normal;transform-origin:0 0;transform:scaleX(0.9550);">93.25 g</div>
<div class="t" style="left:24.6px;top:972.6px;font-size:26.8px;color:#ffffff;font-weight:normal;transform-origin:0 0;transform:scaleX(0.9294);">Cost:</div>
<div class="t" style="left:271.6px;top:972.6px;font-size:26.8px;color:#ffffff;font-weight:normal;transform-origin:0 0;transform:scaleX(0.9319);">1.86</div>
<div class="t" style="left:24.6px;top:1010.7px;font-size:26.8px;color:#ffffff;font-weight:normal;transform-origin:0 0;transform:scaleX(0.9636);">Prepare time:</div>
<div class="t" style="left:271.6px;top:1010.7px;font-size:26.8px;color:#ffffff;font-weight:normal;transform-origin:0 0;transform:scaleX(0.9472);">6m52s</div>
<div class="t" style="left:24.6px;top:1048.9px;font-size:26.8px;color:#ffffff;font-weight:normal;transform-origin:0 0;transform:scaleX(1.0069);">Model printing time:</div>
<div class="t" style="left:271.6px;top:1048.9px;font-size:26.8px;color:#ffffff;font-weight:normal;transform-origin:0 0;transform:scaleX(0.9619);">2h40m</div>
<div class="t" style="left:24.6px;top:1087.0px;font-size:26.8px;color:#ffffff;font-weight:normal;transform-origin:0 0;transform:scaleX(1.0003);">Total time:</div>
<div class="t" style="left:271.6px;top:1087.0px;font-size:26.8px;color:#ffffff;font-weight:normal;transform-origin:0 0;transform:scaleX(0.9619);">2h47m</div>
</div>
<div id="left">
<div class="hd" style="top:4px;height:59px"></div>
<div class="hd" style="top:248px;height:59px"></div>
<div class="hd" style="top:430px;height:58.5px"></div>
<svg class="ic" style="left:0px;top:0px" width="60" height="60" viewBox="0 0 60 60"><path d="M15 25.5 H36.5 V47 H15 Z" fill="none" stroke="#666" stroke-width="2" stroke-linejoin="round"/><path d="M15 25.5 L25 21 H45 L36.5 25.5 M45 21 V41.5 L36.5 47" fill="none" stroke="#666" stroke-width="2" stroke-linejoin="round"/><path d="M29 25.5 V31" stroke="#666" stroke-width="2" stroke-linecap="round"/><path d="M20 41 L27 37.2 H35.5 V41 Z" fill="#b5dcb7" stroke="#4dab52" stroke-width="1.8" stroke-linejoin="round"/></svg>
<div class="t" style="left:70.6px;top:20.2px;font-size:28px;color:#262e30;font-weight:normal;transform-origin:0 0;transform:scaleX(1.0380);">Printer</div>
<svg class="ic" style="left:0;top:0" width="834" height="1734"><path d="M788.5 18.0 L789.9 18.2 L791.2 18.7 L792.4 19.6 L793.4 20.7 L794.2 21.8 L794.9 22.9 L796.2 23.0 L797.6 23.1 L799.0 23.5 L800.4 24.0 L801.5 24.9 L802.4 26.0 L802.9 27.3 L803.1 28.7 L802.9 30.1 L802.5 31.5 L801.9 32.8 L801.3 34.0 L801.9 35.2 L802.5 36.5 L802.9 37.9 L803.1 39.3 L802.9 40.7 L802.4 42.0 L801.5 43.1 L800.4 44.0 L799.0 44.5 L797.6 44.9 L796.2 45.0 L794.9 45.1 L794.2 46.2 L793.4 47.3 L792.4 48.4 L791.2 49.3 L789.9 49.8 L788.5 50.0 L787.1 49.8 L785.8 49.3 L784.6 48.4 L783.6 47.3 L782.8 46.2 L782.1 45.1 L780.8 45.0 L779.4 44.9 L778.0 44.5 L776.6 44.0 L775.5 43.1 L774.6 42.0 L774.1 40.7 L773.9 39.3 L774.1 37.9 L774.5 36.5 L775.1 35.2 L775.7 34.0 L775.1 32.8 L774.5 31.5 L774.1 30.1 L773.9 28.7 L774.1 27.3 L774.6 26.0 L775.5 24.9 L776.6 24.0 L778.0 23.5 L779.4 23.1 L780.8 23.0 L782.1 22.9 L782.8 21.8 L783.6 20.7 L784.6 19.6 L785.8 18.7 L787.1 18.2 L788.5 18.0 Z" fill="none" stroke="#262e30" stroke-width="2.2" stroke-linejoin="round"/><circle cx="788.5" cy="34" r="4.8" fill="none" stroke="#262e30" stroke-width="2.2"/></svg>
<div class="bx" style="left:1.0px;top:97.5px;width:762.0px;height:47.3px;"></div>
<svg class="ic" style="left:12.8px;top:114.1px" width="25" height="13" viewBox="-2 -2 25 13"><path d="M0 0 L10.5 9 L21 0" fill="none" stroke="#9d9d9d" stroke-width="2" stroke-linecap="round" stroke-linejoin="round"/></svg>
<div class="t" style="left:43.2px;top:108.0px;font-size:28px;color:#262e30;font-weight:normal;transform-origin:0 0;transform:scaleX(1.0098);">Bambu Lab X1 Carbon 0.4 nozzle</div>
<svg class="ic" style="left:771px;top:105px" width="32" height="32" viewBox="-2 -2 32 32"><path d="M13 2 H6 Q1.5 2 1.5 6.5 V21.5 Q1.5 26 6 26 H22 Q26.5 26 26.5 21.5 V15" fill="none" stroke="#4a5254" stroke-width="2.2" stroke-linecap="round"/><path d="M14 15 L26.5 2.5" fill="none" stroke="#4a5254" stroke-width="2.2" stroke-linecap="round"/></svg>
<div class="t" style="left:18.3px;top:173.2px;font-size:28px;color:#262e30;font-weight:normal;transform-origin:0 0;transform:scaleX(1.0287);">Plate type</div>
<div class="bx" style="left:193.3px;top:157.0px;width:619.7px;height:57.8px;"></div>
<svg class="ic" style="left:204.5px;top:179.1px" width="25" height="13" viewBox="-2 -2 25 13"><path d="M0 0 L10.5 9 L21 0" fill="none" stroke="#9d9d9d" stroke-width="2" stroke-linecap="round" stroke-linejoin="round"/></svg>
<div class="t" style="left:234.9px;top:174.3px;font-size:28px;color:#262e30;font-weight:normal;transform-origin:0 0;transform:scaleX(1.0068);">Cool Plate / PLA Plate</div>
<svg class="ic" style="left:14px;top:260px" width="36" height="34" viewBox="0 0 36 34"><ellipse cx="27" cy="17" rx="3.6" ry="13" fill="none" stroke="#6b6b6b" stroke-width="1.8"/><path d="M8 4 Q3 6 3 17 Q3 28 8 30" fill="none" stroke="#6b6b6b" stroke-width="1.8" stroke-linecap="round"/><path d="M14 4 Q10 8 10 17 Q10 26 14 30" fill="none" stroke="#4dab52" stroke-width="1.8" stroke-linecap="round"/><path d="M20 4 Q16 8 16 17 Q16 26 20 30" fill="none" stroke="#4dab52" stroke-width="1.8" stroke-linecap="round"/></svg>
<div class="t" style="left:70.6px;top:264.6px;font-size:28px;color:#262e30;font-weight:normal;transform-origin:0 0;transform:scaleX(1.0123);">Filament</div>
<svg class="ic" style="left:564px;top:264px" width="28" height="28" viewBox="-14 -14 28 28"><path d="M-12 0 H12 M0 -12 V12" stroke="#262e30" stroke-width="2.2" stroke-linecap="round"/></svg>
<svg class="ic" style="left:626px;top:264px" width="28" height="28" viewBox="-14 -14 28 28"><path d="M-12 0 H12" stroke="#262e30" stroke-width="2.2" stroke-linecap="round"/></svg>
<svg class="ic" style="left:704px;top:261px" width="40" height="36" viewBox="0 0 40 36"><path d="M5 16 V5 Q5 3 7 3 H28 Q30 3 30 5 V12" fill="none" stroke="#262e30" stroke-width="2"/><path d="M10 8 V16 M15 8 V16 M20 8 V16 M25 8 V14" stroke="#262e30" stroke-width="2.6"/><path d="M5 8 H30" stroke="#262e30" stroke-width="1.6"/><path d="M18 28 H5 Q3 28 3 26 V17 H18" fill="none" stroke="#262e30" stroke-width="2"/><circle cx="27" cy="24" r="9.5" fill="#f3f3f3" stroke="#262e30" stroke-width="2"/><path d="M21.5 21.5 H32 L29.5 19 M32.5 26.5 H22 L24.5 29" fill="none" stroke="#262e30" stroke-width="1.6" stroke-linecap="round" stroke-linejoin="round"/></svg>
<svg class="ic" style="left:0;top:0" width="834" height="1734"><path d="M788.2 262.2 L789.6 262.4 L790.9 262.9 L792.1 263.8 L793.1 264.9 L793.9 266.0 L794.6 267.1 L795.9 267.2 L797.3 267.3 L798.7 267.7 L800.1 268.2 L801.2 269.1 L802.1 270.2 L802.6 271.5 L802.8 272.9 L802.6 274.3 L802.2 275.7 L801.6 277.0 L801.0 278.2 L801.6 279.4 L802.2 280.7 L802.6 282.1 L802.8 283.5 L802.6 284.9 L802.1 286.2 L801.2 287.3 L800.1 288.2 L798.7 288.7 L797.3 289.1 L795.9 289.2 L794.6 289.3 L793.9 290.4 L793.1 291.5 L792.1 292.6 L790.9 293.5 L789.6 294.0 L788.2 294.2 L786.8 294.0 L785.5 293.5 L784.3 292.6 L783.3 291.5 L782.5 290.4 L781.8 289.3 L780.5 289.2 L779.1 289.1 L777.7 288.7 L776.3 288.2 L775.2 287.3 L774.3 286.2 L773.8 284.9 L773.6 283.5 L773.8 282.1 L774.2 280.7 L774.8 279.4 L775.4 278.2 L774.8 277.0 L774.2 275.7 L773.8 274.3 L773.6 272.9 L773.8 271.5 L774.3 270.2 L775.2 269.1 L776.3 268.2 L777.7 267.7 L779.1 267.3 L780.5 267.2 L781.8 267.1 L782.5 266.0 L783.3 264.9 L784.3 263.8 L785.5 262.9 L786.8 262.4 L788.2 262.2 Z" fill="none" stroke="#262e30" stroke-width="2.2" stroke-linejoin="round"/><circle cx="788.2" cy="278.2" r="4.8" fill="none" stroke="#262e30" stroke-width="2.2"/></svg>
<div style="position:absolute;left:10px;top:348px;width:40px;height:40px;background:#4dab52"></div>
<div class="t" style="left:24.5px;top:356.4px;font-size:25px;color:#fff;font-weight:normal;">1</div>
<div class="bx" style="left:61.3px;top:345.3px;width:713.7px;height:47.1px;"></div>
<div class="t" style="left:70.6px;top:356.8px;font-size:28px;color:#262e30;font-weight:normal;transform-origin:0 0;transform:scaleX(1.0003);">Generic PLA</div>
<svg class="ic" style="left:787px;top:352.5px" width="32" height="32" viewBox="-2 -2 32 32"><path d="M13 2 H6 Q1.5 2 1.5 6.5 V21.5 Q1.5 26 6 26 H22 Q26.5 26 26.5 21.5 V15" fill="none" stroke="#4a5254" stroke-width="2.2" stroke-linecap="round"/><path d="M14 15 L26.5 2.5" fill="none" stroke="#4a5254" stroke-width="2.2" stroke-linecap="round"/></svg>
<svg class="ic" style="left:14px;top:443px" width="38" height="36" viewBox="0 0 38 36"><path d="M10 4 H34 L26 12 H3 Z" fill="none" stroke="#6b6b6b" stroke-width="2" stroke-linejoin="round"/><path d="M33 13.5 L26 20.5 H4.5 L8 17" fill="none" stroke="#4dab52" stroke-width="2.2" stroke-linejoin="round" stroke-linecap="round"/><path d="M33 21.5 L25 30.5 H3.5 L7 26.5" fill="none" stroke="#6b6b6b" stroke-width="2.2" stroke-linejoin="round" stroke-linecap="round"/></svg>
<div class="t" style="left:75.0px;top:445.7px;font-size:28px;color:#262e30;font-weight:normal;transform-origin:0 0;transform:scaleX(1.0024);">Process</div>
<div style="position:absolute;left:209px;top:438.5px;width:206px;height:41px;border-radius:21px;background:#d8d8d8"></div>
<div style="position:absolute;left:210px;top:439.5px;width:105px;height:39px;border-radius:20px;background:#4dab52"></div>
<div class="t" style="left:229.4px;top:450.1px;font-size:23.5px;color:#fff;font-weight:normal;transform-origin:0 0;transform:scaleX(0.9582);">Global</div>
<div class="t" style="left:319.4px;top:450.1px;font-size:23.5px;color:#6e6e6e;font-weight:normal;transform-origin:0 0;transform:scaleX(0.9966);">Objects</div>
<div class="t" style="left:545.2px;top:445.7px;font-size:28px;color:#262e30;font-weight:normal;transform-origin:0 0;transform:scaleX(1.0003);">Advance</div>
<div style="position:absolute;left:664px;top:444px;width:55px;height:32px;border-radius:16px;background:#4dab52"></div>
<div style="position:absolute;left:689.5px;top:446.5px;width:27px;height:27px;border-radius:14px;background:#fff"></div>
<svg class="ic" style="left:746px;top:442px" width="38" height="36" viewBox="0 0 38 36"><rect x="2.5" y="2.5" width="32" height="30.5" rx="4" fill="none" stroke="#262e30" stroke-width="2.2"/><path d="M9 10 H10.5 M15 10 H29 M9 18 H10.5 M15 18 H29 M9 26 H10.5 M15 26 H29" stroke="#262e30" stroke-width="2.2" stroke-linecap="round"/></svg>
<svg class="ic" style="left:786px;top:443px" width="34" height="36" viewBox="0 0 34 36"><circle cx="10" cy="10" r="6" fill="none" stroke="#8fcf93" stroke-width="3.2" stroke-dasharray="3.2 1.6"/><circle cx="10" cy="10" r="8.6" fill="none" stroke="#8fcf93" stroke-width="1.2"/><circle cx="25.5" cy="8.5" r="3.4" fill="none" stroke="#8fcf93" stroke-width="2.6" stroke-dasharray="2.2 1.4"/><circle cx="9.5" cy="27" r="3.6" fill="none" stroke="#8fcf93" stroke-width="2.6" stroke-dasharray="2.2 1.4"/><path d="M16 16 L28 29" stroke="#8fcf93" stroke-width="3.4" stroke-linecap="round"/></svg>
<svg class="ic" style="left:4px;top:524.5px" width="34" height="32" viewBox="-16 -16 34 32"><path d="M-7.5 8.5 A11 11 0 1 1 11 0.5" fill="none" stroke="#e8774f" stroke-width="1.8" stroke-linecap="round"/><path d="M5.5 -1 L16.5 -1 L11 5.5 Z" fill="#e8774f"/></svg>
<div class="bx" style="left:53.8px;top:515.7px;width:647.2px;height:46.6px;"></div>
<svg class="ic" style="left:64.5px;top:532.0px" width="25" height="13" viewBox="-2 -2 25 13"><path d="M0 0 L10.5 9 L21 0" fill="none" stroke="#9d9d9d" stroke-width="2" stroke-linecap="round" stroke-linejoin="round"/></svg>
<div class="t" style="left:95.1px;top:526.2px;font-size:28px;color:#262e30;font-weight:normal;transform-origin:0 0;transform:scaleX(1.0047);">* 0.20mm Standard @BBL X1C</div>
<svg class="ic" style="left:735px;top:525px" width="32" height="32" viewBox="0 0 32 32"><path d="M3.5 4.5 Q3.5 3 5 3 H20 L26.5 9.5 V25 Q26.5 26.5 25 26.5 H5 Q3.5 26.5 3.5 25 Z" fill="none" stroke="#262e30" stroke-width="2" stroke-linejoin="round"/><path d="M9 3 V9 H18 V3" fill="none" stroke="#262e30" stroke-width="1.8"/><path d="M7.5 26 V18.5 H22.5 V26" fill="none" stroke="#262e30" stroke-width="1.8"/></svg>
<svg class="ic" style="left:782px;top:525px" width="36" height="34" viewBox="0 0 36 34"><circle cx="12.5" cy="12.5" r="9.5" fill="none" stroke="#262e30" stroke-width="2"/><path d="M19.5 19.5 L32 31" stroke="#262e30" stroke-width="2.2" stroke-linecap="round"/></svg>
<div class="t" style="left:26.7px;top:604.9px;font-size:28px;color:#e8774f;font-weight:bold;transform-origin:0 0;transform:scaleX(1.0219);-webkit-text-stroke:0;">Quality</div>
<div class="t" style="left:183.0px;top:604.9px;font-size:28px;color:#e8774f;font-weight:normal;transform-origin:0 0;transform:scaleX(1.0438);">Strength</div>
<div class="t" style="left:352.4px;top:604.9px;font-size:28px;color:#6b6b6b;font-weight:normal;transform-origin:0 0;transform:scaleX(1.0115);">Speed</div>
<div class="t" style="left:494.7px;top:604.9px;font-size:28px;color:#e8774f;font-weight:normal;transform-origin:0 0;transform:scaleX(1.0441);">Support</div>
<div class="t" style="left:658.6px;top:604.9px;font-size:28px;color:#6b6b6b;font-weight:normal;transform-origin:0 0;transform:scaleX(1.0318);">Others</div>
<div style="position:absolute;left:19px;top:637.5px;width:110px;height:5.5px;border-radius:3px;background:#4dab52"></div>
<div style="position:absolute;left:0;top:642.6px;width:834px;height:1.6px;background:#c9c9c9"></div>
<div style="position:absolute;left:805px;top:658px;width:29px;height:1076px;background:#f5f5f5"></div>
<div style="position:absolute;left:813px;top:1191px;width:15px;height:560px;border-radius:8px;background:#808080"></div>
<div style="position:absolute;left:485px;top:657.6px;width:238px;height:1.6px;background:#dcdcdc"></div>
<div class="t" style="left:44.6px;top:680.9px;font-size:28px;color:#262e30;font-weight:normal;transform-origin:0 0;transform:scaleX(1.0754);">Arc fitting</div><div class="cb on" style="left:486px;top:676px"><svg width="32" height="32" viewBox="0 0 32 32"><path d="M7 14.5 L15.5 22.5 L27.5 10" fill="none" stroke="#fff" stroke-width="2.4" stroke-linecap="round" stroke-linejoin="round"/></svg></div>
<div class="t" style="left:44.6px;top:736.6px;font-size:28px;color:#262e30;font-weight:normal;transform-origin:0 0;transform:scaleX(1.0270);">X-Y hole compensation</div><div class="bx" style="left:485.0px;top:723.1px;width:238.0px;height:47.8px;"></div><div class="t" style="left:498.7px;top:733.8px;font-size:28.5px;color:#262e30;font-weight:normal;transform-origin:0 0;transform:scaleX(1.0152);">0</div><div class="t" style="left:663.0px;top:739.9px;font-size:24px;color:#6b6b6b;font-weight:normal;transform-origin:0 0;transform:scaleX(0.9879);">mm</div>
<div class="t" style="left:44.6px;top:792.6px;font-size:28px;color:#262e30;font-weight:normal;transform-origin:0 0;transform:scaleX(1.0387);">X-Y contour compensation</div><div class="bx" style="left:485.0px;top:779.1px;width:238.0px;height:47.8px;"></div><div class="t" style="left:498.7px;top:789.8px;font-size:28.5px;color:#262e30;font-weight:normal;transform-origin:0 0;transform:scaleX(1.0152);">0</div><div class="t" style="left:663.0px;top:795.9px;font-size:24px;color:#6b6b6b;font-weight:normal;transform-origin:0 0;transform:scaleX(0.9879);">mm</div>
<div class="t" style="left:44.6px;top:848.6px;font-size:28px;color:#262e30;font-weight:normal;transform-origin:0 0;transform:scaleX(1.0393);">Elephant foot compensation</div><div class="bx" style="left:485.0px;top:835.1px;width:238.0px;height:47.8px;"></div><div class="t" style="left:498.7px;top:845.8px;font-size:28.5px;color:#262e30;font-weight:normal;transform-origin:0 0;transform:scaleX(0.9246);">0.15</div><div class="t" style="left:663.0px;top:851.9px;font-size:24px;color:#6b6b6b;font-weight:normal;transform-origin:0 0;transform:scaleX(0.9879);">mm</div>
<svg class="ic" style="left:3px;top:907.7px" width="40" height="32" viewBox="0 0 40 32"><path d="M5 22 Q8 10 22 9 H30 V22 Z" fill="none" stroke="#262e30" stroke-width="1.8" stroke-linejoin="round"/><path d="M14 19 Q15 14 21 13 H26 V19 Z" fill="#9a9a9a" stroke="#262e30" stroke-width="1.4"/><path d="M18 9 L20 5 H34 Q36 5 36 7 V12" fill="none" stroke="#262e30" stroke-width="1.8"/><path d="M3 27 H35" stroke="#262e30" stroke-width="1.8" stroke-linecap="round"/></svg><div class="t" style="left:51.2px;top:914.2px;font-size:28px;color:#1f2628;font-weight:bold;transform-origin:0 0;transform:scaleX(1.0034);-webkit-text-stroke:0;">Ironing</div><div class="ln" style="left:157.3px;top:925.2px;width:636.7px"></div>
<div class="t" style="left:44.6px;top:976.5px;font-size:28px;color:#e8774f;font-weight:normal;transform-origin:0 0;transform:scaleX(1.0267);">Ironing Type</div><div class="bx" style="left:485.0px;top:963.0px;width:238.0px;height:47.8px;"></div><svg class="ic" style="left:498.0px;top:979.9px" width="23" height="12.5" viewBox="-2 -2 23 12.5"><path d="M0 0 L9.5 8.5 L19 0" fill="none" stroke="#9d9d9d" stroke-width="2" stroke-linecap="round" stroke-linejoin="round"/></svg><div class="t" style="left:526.9px;top:974.9px;font-size:28px;color:#262e30;font-weight:normal;transform-origin:0 0;transform:scaleX(1.0462);">Topmost surf...</div><svg class="ic" style="left:447px;top:971.1px" width="34" height="32" viewBox="-16 -16 34 32"><path d="M-7.5 8.5 A11 11 0 1 1 11 0.5" fill="none" stroke="#e8774f" stroke-width="1.8" stroke-linecap="round"/><path d="M5.5 -1 L16.5 -1 L11 5.5 Z" fill="#e8774f"/></svg>
<div class="t" style="left:44.6px;top:1032.5px;font-size:28px;color:#262e30;font-weight:normal;transform-origin:0 0;transform:scaleX(1.0257);">Ironing Pattern</div>
<div class="bx" style="left:485.0px;top:1019.0px;width:238.0px;height:47.8px;"></div>
<svg class="ic" style="left:496.5px;top:1021px" width="45" height="45" viewBox="-1 -1 45 45"><defs><clipPath id="rc"><rect x="0" y="0" width="43" height="43" rx="3"/></clipPath></defs><rect x="0" y="0" width="43" height="43" rx="3" fill="#fff"/><g clip-path="url(#rc)"><path d="M-41 0 L2 43" stroke="#262e30" stroke-width="1.7"/><path d="M2 0 L-41 43" stroke="#262e30" stroke-width="1.7"/><path d="M-31 0 L12 43" stroke="#262e30" stroke-width="1.7"/><path d="M12 0 L-31 43" stroke="#262e30" stroke-width="1.7"/><path d="M-21 0 L22 43" stroke="#262e30" stroke-width="1.7"/><path d="M22 0 L-21 43" stroke="#262e30" stroke-width="1.7"/><path d="M-11 0 L32 43" stroke="#262e30" stroke-width="1.7"/><path d="M32 0 L-11 43" stroke="#262e30" stroke-width="1.7"/><path d="M-1 0 L42 43" stroke="#262e30" stroke-width="1.7"/><path d="M42 0 L-1 43" stroke="#262e30" stroke-width="1.7"/><path d="M9 0 L52 43" stroke="#262e30" stroke-width="1.7"/><path d="M52 0 L9 43" stroke="#262e30" stroke-width="1.7"/><path d="M19 0 L62 43" stroke="#262e30" stroke-width="1.7"/><path d="M62 0 L19 43" stroke="#262e30" stroke-width="1.7"/><path d="M29 0 L72 43" stroke="#262e30" stroke-width="1.7"/><path d="M72 0 L29 43" stroke="#262e30" stroke-width="1.7"/><path d="M39 0 L82 43" stroke="#262e30" stroke-width="1.7"/><path d="M82 0 L39 43" stroke="#262e30" stroke-width="1.7"/></g><rect x="0.5" y="0.5" width="42" height="42" rx="3" fill="none" stroke="#262e30" stroke-width="2.4"/></svg>
<div class="t" style="left:542.6px;top:1032.1px;font-size:28px;color:#262e30;font-weight:normal;transform-origin:0 0;transform:scaleX(1.0206);">Rectilinear</div>
<div class="t" style="left:44.6px;top:1088.6px;font-size:28px;color:#262e30;font-weight:normal;transform-origin:0 0;transform:scaleX(1.0242);">Ironing speed</div><div class="bx" style="left:485.0px;top:1075.1px;width:238.0px;height:47.8px;"></div><div class="t" style="left:498.7px;top:1085.8px;font-size:28.5px;color:#262e30;font-weight:normal;transform-origin:0 0;transform:scaleX(1.0283);">30</div><div class="t" style="left:642.9px;top:1091.9px;font-size:24px;color:#6b6b6b;font-weight:normal;transform-origin:0 0;transform:scaleX(1.0161);">mm/s</div>
<div class="t" style="left:44.6px;top:1144.6px;font-size:28px;color:#262e30;font-weight:normal;transform-origin:0 0;transform:scaleX(1.0350);">Ironing flow</div><div class="bx" style="left:485.0px;top:1131.1px;width:238.0px;height:47.8px;"></div><div class="t" style="left:498.7px;top:1141.8px;font-size:28.5px;color:#262e30;font-weight:normal;transform-origin:0 0;transform:scaleX(0.8895);">10</div><div class="t" style="left:682.8px;top:1147.9px;font-size:24px;color:#6b6b6b;font-weight:normal;transform-origin:0 0;transform:scaleX(0.9605);">%</div>
<div class="t" style="left:44.6px;top:1200.6px;font-size:28px;color:#262e30;font-weight:normal;transform-origin:0 0;transform:scaleX(1.0283);">Ironing line spacing</div><div class="bx" style="left:485.0px;top:1187.1px;width:238.0px;height:47.8px;"></div><div class="t" style="left:498.7px;top:1197.8px;font-size:28.5px;color:#262e30;font-weight:normal;transform-origin:0 0;transform:scaleX(0.9246);">0.15</div><div class="t" style="left:663.0px;top:1203.9px;font-size:24px;color:#6b6b6b;font-weight:normal;transform-origin:0 0;transform:scaleX(0.9879);">mm</div>
<svg class="ic" style="left:3px;top:1260.7px" width="40" height="36" viewBox="0 0 40 36"><path d="M4 5 Q12 2 19 4.5 Q27 7 35 4.5 V30 Q27 33 19 30.5 Q12 28 4 30.5 Z" fill="none" stroke="#262e30" stroke-width="1.8" stroke-linejoin="round"/><path d="M9 13.5 Q14 12 20 13.5 M15 20.5 Q21 22 26 20" fill="none" stroke="#262e30" stroke-width="1.8" stroke-linecap="round"/></svg><div class="t" style="left:51.2px;top:1266.2px;font-size:28px;color:#1f2628;font-weight:bold;transform-origin:0 0;transform:scaleX(1.0307);-webkit-text-stroke:0;">Wall generator</div><div class="ln" style="left:261.6px;top:1277.2px;width:532.4px"></div>
<div class="t" style="left:44.6px;top:1328.5px;font-size:28px;color:#262e30;font-weight:normal;transform-origin:0 0;transform:scaleX(1.0268);">Wall generator</div><div class="bx" style="left:485.0px;top:1315.0px;width:238.0px;height:47.8px;"></div><svg class="ic" style="left:498.0px;top:1331.8px" width="23" height="12.5" viewBox="-2 -2 23 12.5"><path d="M0 0 L9.5 8.5 L19 0" fill="none" stroke="#9d9d9d" stroke-width="2" stroke-linecap="round" stroke-linejoin="round"/></svg><div class="t" style="left:526.9px;top:1326.9px;font-size:28px;color:#262e30;font-weight:normal;transform-origin:0 0;transform:scaleX(1.0052);">Classic</div>
<svg class="ic" style="left:2px;top:1387.7px" width="42" height="40" viewBox="0 0 42 40"><path d="M17.0 3.5 L17.9 3.5 L18.8 3.6 L19.3 5.2 L19.7 6.9 L20.4 7.1 L21.0 7.3 L21.6 7.6 L22.2 7.9 L23.7 7.0 L25.2 6.3 L25.9 6.9 L26.5 7.5 L27.1 8.1 L27.7 8.8 L27.0 10.3 L26.1 11.8 L26.4 12.4 L26.7 13.0 L26.9 13.6 L27.1 14.3 L28.8 14.7 L30.4 15.2 L30.5 16.1 L30.5 17.0 L30.5 17.9 L30.4 18.8 L28.8 19.3 L27.1 19.7 L26.9 20.4 L26.7 21.0 L26.4 21.6 L26.1 22.2 L27.0 23.7 L27.7 25.2 L27.1 25.9 L26.5 26.5 L25.9 27.1 L25.2 27.7 L23.7 27.0 L22.2 26.1 L21.6 26.4 L21.0 26.7 L20.4 26.9 L19.7 27.1 L19.3 28.8 L18.8 30.4 L17.9 30.5 L17.0 30.5 L16.1 30.5 L15.2 30.4 L14.7 28.8 L14.3 27.1 L13.6 26.9 L13.0 26.7 L12.4 26.4 L11.8 26.1 L10.3 27.0 L8.8 27.7 L8.1 27.1 L7.5 26.5 L6.9 25.9 L6.3 25.2 L7.0 23.7 L7.9 22.3 L7.6 21.6 L7.3 21.0 L7.1 20.4 L6.9 19.7 L5.2 19.3 L3.6 18.8 L3.5 17.9 L3.5 17.0 L3.5 16.1 L3.6 15.2 L5.2 14.7 L6.9 14.3 L7.1 13.6 L7.3 13.0 L7.6 12.4 L7.9 11.8 L7.0 10.3 L6.3 8.8 L6.9 8.1 L7.5 7.5 L8.1 6.9 L8.8 6.3 L10.3 7.0 L11.7 7.9 L12.4 7.6 L13.0 7.3 L13.6 7.1 L14.3 6.9 L14.7 5.2 L15.2 3.6 L16.1 3.5 L17.0 3.5 Z" fill="#fff" stroke="#262e30" stroke-width="1.6" stroke-linejoin="round"/><circle cx="17" cy="17" r="4.2" fill="#9a9a9a" stroke="#262e30" stroke-width="1.5"/><path d="M29.5 19.0 L30.1 19.0 L30.6 19.1 L30.9 20.2 L31.1 21.4 L31.5 21.5 L31.9 21.7 L32.3 21.8 L32.6 22.0 L33.6 21.3 L34.7 20.8 L35.1 21.1 L35.5 21.5 L35.9 21.9 L36.2 22.3 L35.7 23.4 L35.0 24.3 L35.2 24.7 L35.3 25.1 L35.5 25.5 L35.6 25.9 L36.8 26.1 L37.9 26.4 L38.0 26.9 L38.0 27.5 L38.0 28.1 L37.9 28.6 L36.8 28.9 L35.6 29.1 L35.5 29.5 L35.3 29.9 L35.2 30.3 L35.0 30.6 L35.7 31.6 L36.2 32.7 L35.9 33.1 L35.5 33.5 L35.1 33.9 L34.7 34.2 L33.6 33.7 L32.6 33.0 L32.3 33.2 L31.9 33.3 L31.5 33.5 L31.1 33.6 L30.9 34.8 L30.6 35.9 L30.1 36.0 L29.5 36.0 L28.9 36.0 L28.4 35.9 L28.1 34.8 L27.9 33.6 L27.5 33.5 L27.1 33.3 L26.7 33.2 L26.4 33.0 L25.4 33.7 L24.3 34.2 L23.9 33.9 L23.5 33.5 L23.1 33.1 L22.8 32.7 L23.3 31.6 L24.0 30.7 L23.8 30.3 L23.7 29.9 L23.5 29.5 L23.4 29.1 L22.2 28.9 L21.1 28.6 L21.0 28.1 L21.0 27.5 L21.0 26.9 L21.1 26.4 L22.2 26.1 L23.4 25.9 L23.5 25.5 L23.7 25.1 L23.8 24.7 L24.0 24.3 L23.3 23.4 L22.8 22.3 L23.1 21.9 L23.5 21.5 L23.9 21.1 L24.3 20.8 L25.4 21.3 L26.3 22.0 L26.7 21.8 L27.1 21.7 L27.5 21.5 L27.9 21.4 L28.1 20.2 L28.4 19.1 L28.9 19.0 L29.5 19.0 Z" fill="#fff" stroke="#262e30" stroke-width="1.6" stroke-linejoin="round"/><circle cx="29.5" cy="27.5" r="2.6" fill="#fff" stroke="#262e30" stroke-width="1.5"/></svg><div class="t" style="left:51.2px;top:1394.2px;font-size:28px;color:#1f2628;font-weight:bold;transform-origin:0 0;transform:scaleX(1.0117);-webkit-text-stroke:0;">Advanced</div><div class="ln" style="left:195.8px;top:1405.2px;width:598.2px"></div>
<div class="t" style="left:44.6px;top:1456.5px;font-size:28px;color:#262e30;font-weight:normal;transform-origin:0 0;transform:scaleX(1.0300);">Order of walls</div><div class="bx" style="left:485.0px;top:1443.0px;width:238.0px;height:47.8px;"></div><svg class="ic" style="left:498.0px;top:1459.8px" width="23" height="12.5" viewBox="-2 -2 23 12.5"><path d="M0 0 L9.5 8.5 L19 0" fill="none" stroke="#9d9d9d" stroke-width="2" stroke-linecap="round" stroke-linejoin="round"/></svg><div class="t" style="left:526.9px;top:1454.9px;font-size:28px;color:#262e30;font-weight:normal;transform-origin:0 0;transform:scaleX(1.0331);">inner/outer</div>
<div class="t" style="left:44.6px;top:1512.8px;font-size:28px;color:#262e30;font-weight:normal;transform-origin:0 0;transform:scaleX(1.0639);">Print infill first</div><div class="cb" style="left:486px;top:1507.9px"></div>
<div class="t" style="left:44.6px;top:1568.6px;font-size:28px;color:#262e30;font-weight:normal;transform-origin:0 0;transform:scaleX(1.0410);">Bridge flow</div><div class="bx" style="left:485.0px;top:1555.1px;width:238.0px;height:47.8px;"></div><div class="t" style="left:498.7px;top:1565.8px;font-size:28.5px;color:#262e30;font-weight:normal;transform-origin:0 0;transform:scaleX(0.7377);">1</div>
<div class="t" style="left:44.6px;top:1624.8px;font-size:28px;color:#262e30;font-weight:normal;transform-origin:0 0;transform:scaleX(1.0461);">Thick bridges</div><div class="cb" style="left:486px;top:1619.9px"></div>
<div class="t" style="left:44.6px;top:1680.5px;font-size:28px;color:#262e30;font-weight:normal;transform-origin:0 0;transform:scaleX(1.0340);">Only one wall on top surfaces</div><div class="bx" style="left:485.0px;top:1667.0px;width:238.0px;height:47.8px;"></div><svg class="ic" style="left:498.0px;top:1683.8px" width="23" height="12.5" viewBox="-2 -2 23 12.5"><path d="M0 0 L9.5 8.5 L19 0" fill="none" stroke="#9d9d9d" stroke-width="2" stroke-linecap="round" stroke-linejoin="round"/></svg><div class="t" style="left:526.9px;top:1678.9px;font-size:28px;color:#262e30;font-weight:normal;transform-origin:0 0;transform:scaleX(1.0419);">Top surfaces</div>
<div class="cb" style="left:486px;top:1731.5px"></div>
</div>
<div id="topbar"><div></div></div>
</body></html>
